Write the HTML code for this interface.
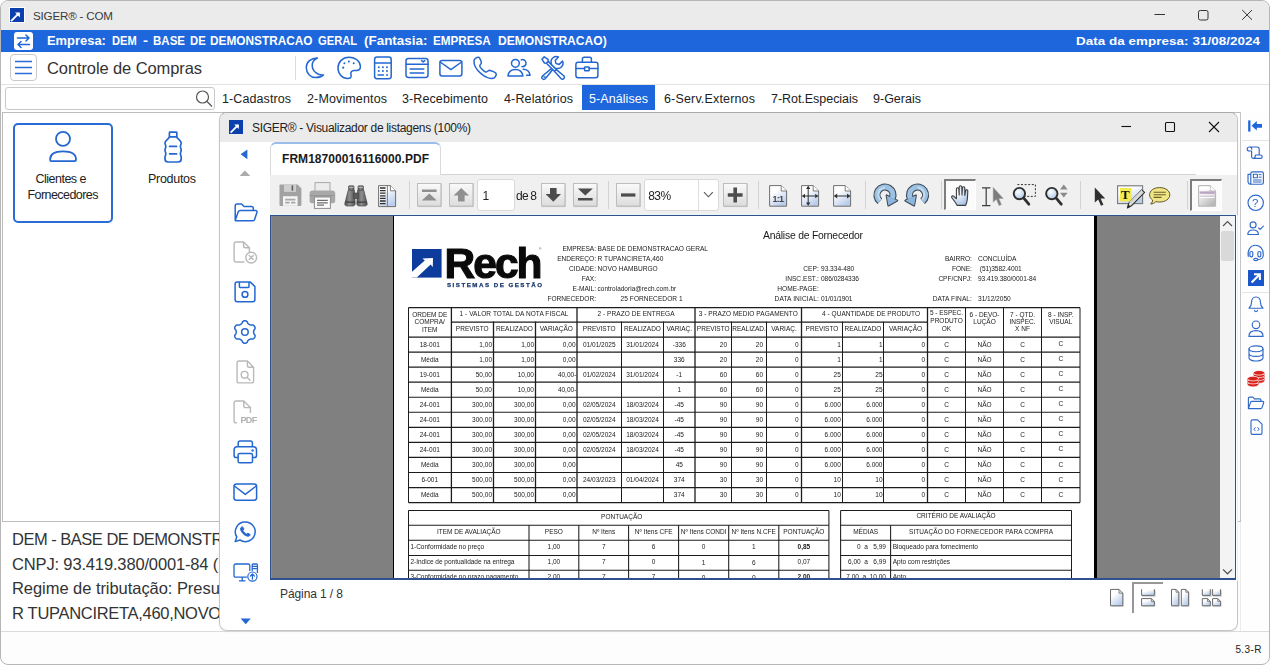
<!DOCTYPE html>
<html lang="pt-BR"><head><meta charset="utf-8"><title>SIGER - COM</title>
<style>
html,body{margin:0;padding:0;}
body{width:1270px;height:665px;overflow:hidden;position:relative;background:#fff;font-family:"Liberation Sans",sans-serif;}
body div,body svg,body span{position:absolute;}
.t{white-space:nowrap;}
svg{overflow:visible;}
</style></head>
<body>
<div style="left:0px;top:0px;width:1270px;height:665px;background:#fdfdfd;border:1px solid #b6b6b6;border-radius:8px;box-sizing:border-box;"></div>
<div style="left:1px;top:1px;width:1268px;height:29px;background:#ebebeb;border-radius:7px 7px 0 0;"></div>
<svg style="left:9px;top:7px;" width="16" height="16" viewBox="0 0 16 16"><rect width="16" height="16" fill="#fff"/><rect x="1" y="1" width="14" height="14" fill="#0b3fae"/><path d="M2 14.2 L10 6.2" stroke="#fff" stroke-width="1.9" fill="none"/><path d="M6 5.4 H10.9 V10.4 Z" fill="#fff"/></svg>
<span class="t" style="top:10px;font-size:11.6px;line-height:11.6px;color:#3a3a3a;letter-spacing:-0.180px;left:33px;">SIGER® - COM</span>
<svg style="left:1153px;top:7px;" width="14" height="14" viewBox="0 0 14 14"><path d="M1.5 7.5 H12" stroke="#333" stroke-width="1"/></svg>
<svg style="left:1197px;top:9px;" width="12" height="12" viewBox="0 0 12 12"><rect x="1.5" y="1.5" width="9.5" height="9.5" rx="1.8" fill="none" stroke="#333" stroke-width="1"/></svg>
<svg style="left:1241px;top:9px;" width="12" height="12" viewBox="0 0 12 12"><path d="M1.2 1 L11 10.8 M11 1 L1.2 10.8" stroke="#333" stroke-width="1"/></svg>
<div style="left:1px;top:30px;width:1268px;height:22px;background:#1d66dc;"></div>
<div style="left:14px;top:32px;width:19px;height:18px;background:#fff;border-radius:3px;"></div>
<svg style="left:14px;top:32px;" width="19" height="18" viewBox="0 0 19 18"><path d="M3.5 6 H15 M12 3 L15 6 L12 9 M15.5 12.5 H4 M7 9.5 L4 12.5 L7 15.5" stroke="#1d66dc" stroke-width="1.5" fill="none" stroke-linecap="round" stroke-linejoin="round"/></svg>
<span class="t" style="top:35px;font-size:12.4px;line-height:12.4px;color:#fff;font-weight:700;left:47.3px;transform:scaleX(1.0428);transform-origin:0 0;">Empresa:</span>
<span class="t" style="top:35px;font-size:12.4px;line-height:12.4px;color:#fff;font-weight:700;left:111.9px;transform:scaleX(0.8967);transform-origin:0 0;">DEM</span>
<span class="t" style="top:35px;font-size:12.4px;line-height:12.4px;color:#fff;font-weight:700;left:142.8px;transform:scaleX(1.2075);transform-origin:0 0;">-</span>
<span class="t" style="top:35px;font-size:12.4px;line-height:12.4px;color:#fff;font-weight:700;left:153px;transform:scaleX(0.9292);transform-origin:0 0;">BASE</span>
<span class="t" style="top:35px;font-size:12.4px;line-height:12.4px;color:#fff;font-weight:700;left:189.6px;transform:scaleX(0.9118);transform-origin:0 0;">DE</span>
<span class="t" style="top:35px;font-size:12.4px;line-height:12.4px;color:#fff;font-weight:700;left:210.1px;transform:scaleX(0.9545);transform-origin:0 0;">DEMONSTRACAO</span>
<span class="t" style="top:35px;font-size:12.4px;line-height:12.4px;color:#fff;font-weight:700;left:318.4px;transform:scaleX(0.9037);transform-origin:0 0;">GERAL</span>
<span class="t" style="top:35px;font-size:12.4px;line-height:12.4px;color:#fff;font-weight:700;left:364.2px;transform:scaleX(1.0832);transform-origin:0 0;">(Fantasia:</span>
<span class="t" style="top:35px;font-size:12.4px;line-height:12.4px;color:#fff;font-weight:700;left:433.3px;transform:scaleX(0.9432);transform-origin:0 0;">EMPRESA</span>
<span class="t" style="top:35px;font-size:12.4px;line-height:12.4px;color:#fff;font-weight:700;left:497.9px;transform:scaleX(0.9748);transform-origin:0 0;">DEMONSTRACAO)</span>
<span class="t" style="top:35px;font-size:13.4px;line-height:13.4px;color:#fff;font-weight:700;letter-spacing:0.062px;right:9.94px;transform-origin:50% 0.061899038461538464px;transform:scaleY(0.875);">Data da empresa: 31/08/2024</span>
<div style="left:1px;top:52px;width:1268px;height:32px;background:#fff;"></div>
<div style="left:1px;top:84px;width:1268px;height:1px;background:#e2e2e2;"></div>
<div style="left:1px;top:85px;width:1268px;height:27px;background:#fff;"></div>
<div style="left:10px;top:54px;width:27px;height:27px;border:1px solid #c9c9c9;border-radius:4px;box-sizing:border-box;background:#fff;"></div>
<svg style="left:10px;top:54px;" width="27" height="27" viewBox="0 0 27 27"><path d="M5 7.5 H22 M5 13.5 H22 M5 19.5 H22" stroke="#2a6cd6" stroke-width="1.6"/></svg>
<span class="t" style="top:60px;font-size:16.5px;line-height:16.5px;color:#333;letter-spacing:-0.102px;left:47px;">Controle de Compras</span>
<div style="left:295px;top:56px;width:1px;height:24px;background:#dcdcdc;"></div>
<div style="left:5px;top:87px;width:210px;height:23px;border:1px solid #c8c8c8;border-radius:3px;box-sizing:border-box;background:#fff;"></div>
<svg style="left:194px;top:89px;" width="20" height="20" viewBox="0 0 20 20"><circle cx="8.5" cy="8" r="6" fill="none" stroke="#555" stroke-width="1.2"/><path d="M13 12.5 L18 17.5" stroke="#555" stroke-width="1.3"/></svg>
<div style="left:582px;top:85px;width:73px;height:25px;background:#1d66dc;"></div>
<span class="t" style="top:93px;font-size:12.5px;line-height:12.5px;color:#222;letter-spacing:0.091px;left:222px;">1-Cadastros</span>
<span class="t" style="top:93px;font-size:12.5px;line-height:12.5px;color:#222;letter-spacing:0.136px;left:307px;">2-Movimentos</span>
<span class="t" style="top:93px;font-size:12.5px;line-height:12.5px;color:#222;letter-spacing:0.103px;left:402px;">3-Recebimento</span>
<span class="t" style="top:93px;font-size:12.5px;line-height:12.5px;color:#222;letter-spacing:0.146px;left:504px;">4-Relatórios</span>
<span class="t" style="top:93px;font-size:12.5px;line-height:12.5px;color:#fff;letter-spacing:0.069px;left:589px;">5-Análises</span>
<span class="t" style="top:93px;font-size:12.5px;line-height:12.5px;color:#222;letter-spacing:0.164px;left:664px;">6-Serv.Externos</span>
<span class="t" style="top:93px;font-size:12.5px;line-height:12.5px;color:#222;letter-spacing:-0.039px;left:771px;">7-Rot.Especiais</span>
<span class="t" style="top:93px;font-size:12.5px;line-height:12.5px;color:#222;letter-spacing:0.009px;left:873px;">9-Gerais</span>
<div style="left:2px;top:112px;width:1239px;height:410px;border:1px solid #bcbcbc;border-right-color:#c6c6c6;box-sizing:border-box;background:#fff;"></div>
<div style="left:13px;top:123px;width:100px;height:100px;border:2px solid #2a6cd6;border-radius:5px;box-sizing:border-box;"></div>
<span class="t" style="top:173px;font-size:12.5px;line-height:12.5px;color:#222;letter-spacing:-0.510px;left:60.74px;transform:translateX(-50%);">Clientes e</span>
<span class="t" style="top:189px;font-size:12.5px;line-height:12.5px;color:#222;letter-spacing:-0.557px;left:62.72px;transform:translateX(-50%);">Fornecedores</span>
<span class="t" style="top:173px;font-size:12.5px;line-height:12.5px;color:#222;letter-spacing:-0.290px;left:171.85px;transform:translateX(-50%);">Produtos</span>
<div style="left:1px;top:522px;width:1268px;height:109px;background:#fff;"></div>
<span class="t" style="top:531px;font-size:16.5px;line-height:16.5px;color:#333;left:12px;letter-spacing:-0.5px;">DEM - BASE DE DEMONSTRACAO GERAL</span>
<span class="t" style="top:556px;font-size:16.5px;line-height:16.5px;color:#333;left:12px;letter-spacing:-0.15px;">CNPJ: 93.419.380/0001-84 (Matriz)</span>
<span class="t" style="top:580px;font-size:16.5px;line-height:16.5px;color:#333;left:12px;letter-spacing:-0.05px;">Regime de tributação: Presumido</span>
<span class="t" style="top:605px;font-size:16.5px;line-height:16.5px;color:#333;left:12px;letter-spacing:-0.3px;">R TUPANCIRETA,460,NOVO HAMBURGO</span>
<div style="left:1px;top:631px;width:1268px;height:1px;background:#dcdcdc;"></div>
<span class="t" style="top:645px;font-size:10px;line-height:10px;color:#222;letter-spacing:0.387px;right:8.21px;">5.3-R</span>
<div style="left:1242px;top:112px;width:27px;height:519px;background:#fefefe;"></div>
<div style="left:1240px;top:522px;width:1px;height:109px;background:#ececec;"></div>
<div style="left:219px;top:112px;width:1019px;height:519px;background:#fff;border:1px solid #c4c4c4;border-top-color:#a9a9a9;border-radius:8px;box-sizing:border-box;box-shadow:0 1px 3px rgba(0,0,0,.05);overflow:hidden;"></div>
<div style="left:220px;top:113px;width:1017px;height:29px;background:#ebebeb;border-radius:7px 7px 0 0;"></div>
<svg style="left:229px;top:120px;" width="14" height="14" viewBox="0 0 14 14"><rect width="14" height="14" fill="#0b3fae"/><path d="M1.6 12.6 L9 5.2" stroke="#fff" stroke-width="1.8" fill="none"/><path d="M5.2 4.4 H9.8 V9 Z" fill="#fff"/></svg>
<span class="t" style="top:122px;font-size:12px;line-height:12px;color:#222;letter-spacing:-0.310px;left:252px;">SIGER® - Visualizador de listagens (100%)</span>
<svg style="left:1119px;top:119px;" width="14" height="14" viewBox="0 0 14 14"><path d="M2.4 7.5 H12" stroke="#111" stroke-width="1.1"/></svg>
<svg style="left:1164px;top:121px;" width="12" height="12" viewBox="0 0 12 12"><rect x="1.5" y="1.5" width="9" height="9" rx="1" fill="none" stroke="#111" stroke-width="1.1"/></svg>
<svg style="left:1208px;top:121px;" width="12" height="12" viewBox="0 0 12 12"><path d="M1 1 L11 11 M11 1 L1 11" stroke="#111" stroke-width="1.1"/></svg>
<div style="left:270px;top:174px;width:926px;height:1px;background:#d4d4d4;"></div>
<div style="left:270px;top:142px;width:171px;height:34px;background:#fff;border:1px solid #dadada;border-top:2px solid #9bbdeb;border-bottom:none;border-radius:6px 6px 0 0;box-sizing:border-box;"></div>
<span class="t" style="top:153px;font-size:12px;line-height:12px;color:#1b1b1b;font-weight:700;letter-spacing:0.045px;left:282px;">FRM18700016116000.PDF</span>
<div style="left:270px;top:175px;width:967px;height:40px;background:#f0f0f0;"></div>
<div style="left:270px;top:214px;width:966px;height:1px;background:#e9f6fd;"></div>
<div style="left:270px;top:215px;width:966px;height:365px;background:#808080;border:1px solid #2f528f;border-bottom-width:2px;box-sizing:border-box;"></div>
<div style="left:271px;top:216px;width:1px;height:362px;background:#6d8fc3;"></div>
<div style="left:1237px;top:215px;width:1px;height:366px;background:#efefef;"></div>
<div style="left:393px;top:216px;width:704px;height:362px;background:#000;"></div>
<div style="left:394px;top:216px;width:700px;height:362px;background:#fff;"></div>
<div style="left:1220px;top:216px;width:14px;height:362px;background:#f3f3f3;"></div>
<div style="left:1234px;top:216px;width:1px;height:362px;background:#e9f6fd;"></div>
<div style="left:1221px;top:231px;width:13px;height:30px;background:#d9d9d9;border-radius:2.5px;"></div>
<svg style="left:1220px;top:217px;" width="16" height="14" viewBox="0 0 16 14"><path d="M3 9 L7.5 4.6 L12 9" stroke="#505050" stroke-width="1.2" fill="none"/></svg>
<svg style="left:1220px;top:565px;" width="16" height="14" viewBox="0 0 16 14"><path d="M3 4.4 L7.5 8.8 L12 4.4" stroke="#505050" stroke-width="1.2" fill="none"/></svg>
<span class="t" style="top:588px;font-size:12px;line-height:12px;color:#333;letter-spacing:-0.097px;left:280px;">Página 1 / 8</span>
<div class="clip" style="left:0;top:0;width:1270px;height:578px;overflow:hidden;will-change:transform;">
<span class="t" style="top:231px;font-size:10.4px;line-height:10.4px;color:#1a1a1a;letter-spacing:-0.227px;left:812.89px;transform:translateX(-50%);">Análise de Fornecedor</span>
<svg style="left:412px;top:249px;" width="29.6" height="28.6" viewBox="0 0 29.6 28.6"><rect width="29.6" height="28.6" fill="#0d3c9c"/><path d="M0 22.8 L12.8 11.6 L10.4 9.6 L21 9 L20.8 18 L18.6 15.6 L4.8 28.6 L0 28.6 Z" fill="#fff"/></svg>
<span class="t" style="top:243px;font-size:42.5px;line-height:42.5px;color:#0a0a0a;font-weight:700;letter-spacing:-1.979px;left:444.6px;-webkit-text-stroke:1.1px #0a0a0a;">Rech</span>
<span class="t" style="top:282px;font-size:6.2px;line-height:6.2px;color:#17386f;font-weight:700;letter-spacing:1.483px;left:447px;-webkit-text-stroke:0.25px #17386f;">SISTEMAS DE GESTÃO</span>
<span class="t" style="top:248px;font-size:3.5px;line-height:3.5px;color:#555;left:539px;">®</span>
<span class="t" style="top:246px;font-size:6.6px;line-height:6.6px;color:#1a1a1a;letter-spacing:-0.083px;right:674.08px;">EMPRESA:</span>
<span class="t" style="top:246px;font-size:6.6px;line-height:6.6px;color:#1a1a1a;letter-spacing:-0.021px;left:597.5px;">BASE DE DEMONSTRACAO GERAL</span>
<span class="t" style="top:256px;font-size:6.6px;line-height:6.6px;color:#1a1a1a;letter-spacing:-0.050px;right:674.05px;">ENDEREÇO:</span>
<span class="t" style="top:256px;font-size:6.6px;line-height:6.6px;color:#1a1a1a;letter-spacing:0.071px;left:597.5px;">R TUPANCIRETA,460</span>
<span class="t" style="top:266px;font-size:6.6px;line-height:6.6px;color:#1a1a1a;letter-spacing:0.042px;right:673.96px;">CIDADE:</span>
<span class="t" style="top:266px;font-size:6.6px;line-height:6.6px;color:#1a1a1a;letter-spacing:0.009px;left:597.5px;">NOVO HAMBURGO</span>
<span class="t" style="top:276px;font-size:6.6px;line-height:6.6px;color:#1a1a1a;letter-spacing:-0.032px;right:674.03px;">FAX:</span>
<span class="t" style="top:286px;font-size:6.6px;line-height:6.6px;color:#1a1a1a;letter-spacing:-0.071px;right:674.07px;">E-MAIL:</span>
<span class="t" style="top:286px;font-size:6.4px;line-height:6.4px;color:#1a1a1a;letter-spacing:0.064px;left:597.5px;">controladoria@rech.com.br</span>
<span class="t" style="top:296px;font-size:6.6px;line-height:6.6px;color:#1a1a1a;letter-spacing:-0.013px;right:674.01px;">FORNECEDOR:</span>
<span class="t" style="top:296px;font-size:6.6px;line-height:6.6px;color:#1a1a1a;letter-spacing:0.046px;left:620.5px;">25 FORNECEDOR 1</span>
<span class="t" style="top:266px;font-size:6.6px;line-height:6.6px;color:#1a1a1a;letter-spacing:0.036px;right:451.16px;">CEP:</span>
<span class="t" style="top:266px;font-size:6.6px;line-height:6.6px;color:#1a1a1a;letter-spacing:-0.019px;left:821px;">93.334-480</span>
<span class="t" style="top:276px;font-size:6.6px;line-height:6.6px;color:#1a1a1a;letter-spacing:0.017px;right:451.18px;">INSC.EST.:</span>
<span class="t" style="top:276px;font-size:6.6px;line-height:6.6px;color:#1a1a1a;letter-spacing:-0.052px;left:821px;">086/0284336</span>
<span class="t" style="top:286px;font-size:6.6px;line-height:6.6px;color:#1a1a1a;letter-spacing:-0.017px;right:451.22px;">HOME-PAGE:</span>
<span class="t" style="top:296px;font-size:6.6px;line-height:6.6px;color:#1a1a1a;letter-spacing:0.100px;right:451.10px;">DATA INICIAL:</span>
<span class="t" style="top:296px;font-size:6.6px;line-height:6.6px;color:#1a1a1a;letter-spacing:-0.168px;left:821px;">01/01/1901</span>
<span class="t" style="top:256px;font-size:6.6px;line-height:6.6px;color:#1a1a1a;letter-spacing:-0.021px;right:298.12px;">BAIRRO:</span>
<span class="t" style="top:256px;font-size:6.6px;line-height:6.6px;color:#1a1a1a;letter-spacing:-0.055px;left:978px;">CONCLUÍDA</span>
<span class="t" style="top:266px;font-size:6.6px;line-height:6.6px;color:#1a1a1a;letter-spacing:-0.039px;right:298.14px;">FONE:</span>
<span class="t" style="top:266px;font-size:6.6px;line-height:6.6px;color:#1a1a1a;letter-spacing:-0.076px;left:979.8px;">(51)3582.4001</span>
<span class="t" style="top:276px;font-size:6.6px;line-height:6.6px;color:#1a1a1a;letter-spacing:-0.072px;right:298.17px;">CPF/CNPJ:</span>
<span class="t" style="top:276px;font-size:6.6px;line-height:6.6px;color:#1a1a1a;letter-spacing:-0.050px;left:978px;">93.419.380/0001-84</span>
<span class="t" style="top:296px;font-size:6.6px;line-height:6.6px;color:#1a1a1a;letter-spacing:0.061px;right:298.04px;">DATA FINAL:</span>
<span class="t" style="top:296px;font-size:6.6px;line-height:6.6px;color:#1a1a1a;letter-spacing:-0.035px;left:978px;">31/12/2050</span>
<span class="t" style="top:312px;font-size:6.5px;line-height:6.5px;color:#1a1a1a;left:429.75px;transform:translateX(-50%);">ORDEM DE</span>
<span class="t" style="top:319px;font-size:6.5px;line-height:6.5px;color:#1a1a1a;left:429.75px;transform:translateX(-50%);">COMPRA/</span>
<span class="t" style="top:327px;font-size:6.5px;line-height:6.5px;color:#1a1a1a;left:429.75px;transform:translateX(-50%);">ITEM</span>
<span class="t" style="top:311px;font-size:6.5px;line-height:6.5px;color:#1a1a1a;letter-spacing:0.075px;left:514.04px;transform:translateX(-50%);">1 - VALOR TOTAL DA NOTA FISCAL</span>
<span class="t" style="top:311px;font-size:6.5px;line-height:6.5px;color:#1a1a1a;letter-spacing:0.060px;left:636.03px;transform:translateX(-50%);">2 - PRAZO DE ENTREGA</span>
<span class="t" style="top:311px;font-size:6.5px;line-height:6.5px;color:#1a1a1a;letter-spacing:0.057px;left:748.28px;transform:translateX(-50%);">3 - PRAZO MEDIO PAGAMENTO</span>
<span class="t" style="top:311px;font-size:6.5px;line-height:6.5px;color:#1a1a1a;letter-spacing:0.040px;left:871.02px;transform:translateX(-50%);">4 - QUANTIDADE DE PRODUTO</span>
<span class="t" style="top:326px;font-size:6.5px;line-height:6.5px;color:#1a1a1a;left:472.25px;transform:translateX(-50%);">PREVISTO</span>
<span class="t" style="top:326px;font-size:6.5px;line-height:6.5px;color:#1a1a1a;left:514.50px;transform:translateX(-50%);">REALIZADO</span>
<span class="t" style="top:326px;font-size:6.5px;line-height:6.5px;color:#1a1a1a;left:556.25px;transform:translateX(-50%);">VARIAÇÃO</span>
<span class="t" style="top:326px;font-size:6.5px;line-height:6.5px;color:#1a1a1a;left:599.25px;transform:translateX(-50%);">PREVISTO</span>
<span class="t" style="top:326px;font-size:6.5px;line-height:6.5px;color:#1a1a1a;left:642.50px;transform:translateX(-50%);">REALIZADO</span>
<span class="t" style="top:326px;font-size:6.5px;line-height:6.5px;color:#1a1a1a;left:679.25px;transform:translateX(-50%);">VARIAÇ.</span>
<span class="t" style="top:326px;font-size:6.5px;line-height:6.5px;color:#1a1a1a;left:713.25px;transform:translateX(-50%);">PREVISTO</span>
<span class="t" style="top:326px;font-size:6.5px;line-height:6.5px;color:#1a1a1a;left:749.00px;transform:translateX(-50%);">REALIZAD.</span>
<span class="t" style="top:326px;font-size:6.5px;line-height:6.5px;color:#1a1a1a;left:784.00px;transform:translateX(-50%);">VARIAÇ.</span>
<span class="t" style="top:326px;font-size:6.5px;line-height:6.5px;color:#1a1a1a;left:822.00px;transform:translateX(-50%);">PREVISTO</span>
<span class="t" style="top:326px;font-size:6.5px;line-height:6.5px;color:#1a1a1a;left:863.00px;transform:translateX(-50%);">REALIZADO</span>
<span class="t" style="top:326px;font-size:6.5px;line-height:6.5px;color:#1a1a1a;left:905.50px;transform:translateX(-50%);">VARIAÇÃO</span>
<span class="t" style="top:310px;font-size:6.5px;line-height:6.5px;color:#1a1a1a;left:946.50px;transform:translateX(-50%);">5 - ESPEC.</span>
<span class="t" style="top:318px;font-size:6.5px;line-height:6.5px;color:#1a1a1a;left:946.50px;transform:translateX(-50%);">PRODUTO</span>
<span class="t" style="top:326px;font-size:6.5px;line-height:6.5px;color:#1a1a1a;left:946.50px;transform:translateX(-50%);">OK</span>
<span class="t" style="top:312px;font-size:6.5px;line-height:6.5px;color:#1a1a1a;left:984.50px;transform:translateX(-50%);">6 - DEVO-</span>
<span class="t" style="top:319px;font-size:6.5px;line-height:6.5px;color:#1a1a1a;left:984.50px;transform:translateX(-50%);">LUÇÃO</span>
<span class="t" style="top:312px;font-size:6.5px;line-height:6.5px;color:#1a1a1a;left:1022.50px;transform:translateX(-50%);">7 - QTD.</span>
<span class="t" style="top:319px;font-size:6.5px;line-height:6.5px;color:#1a1a1a;left:1022.50px;transform:translateX(-50%);">INSPEC.</span>
<span class="t" style="top:326px;font-size:6.5px;line-height:6.5px;color:#1a1a1a;left:1022.50px;transform:translateX(-50%);">X NF</span>
<span class="t" style="top:312px;font-size:6.5px;line-height:6.5px;color:#1a1a1a;left:1060.75px;transform:translateX(-50%);">8 - INSP.</span>
<span class="t" style="top:319px;font-size:6.5px;line-height:6.5px;color:#1a1a1a;left:1060.75px;transform:translateX(-50%);">VISUAL</span>
<span class="t" style="top:342px;font-size:6.5px;line-height:6.5px;color:#1a1a1a;left:429.75px;transform:translateX(-50%);">18-001</span>
<span class="t" style="top:342px;font-size:6.5px;line-height:6.5px;color:#1a1a1a;right:778.00px;">1,00</span>
<span class="t" style="top:342px;font-size:6.5px;line-height:6.5px;color:#1a1a1a;right:736.00px;">1,00</span>
<span class="t" style="top:342px;font-size:6.5px;line-height:6.5px;color:#1a1a1a;right:694.50px;">0,00</span>
<span class="t" style="top:342px;font-size:6.5px;line-height:6.5px;color:#1a1a1a;left:599.25px;transform:translateX(-50%);">01/01/2025</span>
<span class="t" style="top:342px;font-size:6.5px;line-height:6.5px;color:#1a1a1a;left:642.50px;transform:translateX(-50%);">31/01/2024</span>
<span class="t" style="top:342px;font-size:6.5px;line-height:6.5px;color:#1a1a1a;left:679.25px;transform:translateX(-50%);">-336</span>
<span class="t" style="top:342px;font-size:6.5px;line-height:6.5px;color:#1a1a1a;right:543.00px;">20</span>
<span class="t" style="top:342px;font-size:6.5px;line-height:6.5px;color:#1a1a1a;right:507.00px;">20</span>
<span class="t" style="top:342px;font-size:6.5px;line-height:6.5px;color:#1a1a1a;right:471.50px;">0</span>
<span class="t" style="top:342px;font-size:6.5px;line-height:6.5px;color:#1a1a1a;right:429.20px;">1</span>
<span class="t" style="top:342px;font-size:6.5px;line-height:6.5px;color:#1a1a1a;right:387.50px;">1</span>
<span class="t" style="top:342px;font-size:6.5px;line-height:6.5px;color:#1a1a1a;right:344.80px;">0</span>
<span class="t" style="top:342px;font-size:6.5px;line-height:6.5px;color:#1a1a1a;left:946.50px;transform:translateX(-50%);">C</span>
<span class="t" style="top:342px;font-size:6.5px;line-height:6.5px;color:#1a1a1a;left:984.50px;transform:translateX(-50%);">NÃO</span>
<span class="t" style="top:342px;font-size:6.5px;line-height:6.5px;color:#1a1a1a;left:1022.50px;transform:translateX(-50%);">C</span>
<span class="t" style="top:341px;font-size:6.5px;line-height:6.5px;color:#1a1a1a;left:1060.75px;transform:translateX(-50%);">C</span>
<span class="t" style="top:357px;font-size:6.5px;line-height:6.5px;color:#1a1a1a;left:429.75px;transform:translateX(-50%);">Média</span>
<span class="t" style="top:357px;font-size:6.5px;line-height:6.5px;color:#1a1a1a;right:778.00px;">1,00</span>
<span class="t" style="top:357px;font-size:6.5px;line-height:6.5px;color:#1a1a1a;right:736.00px;">1,00</span>
<span class="t" style="top:357px;font-size:6.5px;line-height:6.5px;color:#1a1a1a;right:694.50px;">0,00</span>
<span class="t" style="top:357px;font-size:6.5px;line-height:6.5px;color:#1a1a1a;left:679.25px;transform:translateX(-50%);">336</span>
<span class="t" style="top:357px;font-size:6.5px;line-height:6.5px;color:#1a1a1a;right:543.00px;">20</span>
<span class="t" style="top:357px;font-size:6.5px;line-height:6.5px;color:#1a1a1a;right:507.00px;">20</span>
<span class="t" style="top:357px;font-size:6.5px;line-height:6.5px;color:#1a1a1a;right:471.50px;">0</span>
<span class="t" style="top:357px;font-size:6.5px;line-height:6.5px;color:#1a1a1a;right:429.20px;">1</span>
<span class="t" style="top:357px;font-size:6.5px;line-height:6.5px;color:#1a1a1a;right:387.50px;">1</span>
<span class="t" style="top:357px;font-size:6.5px;line-height:6.5px;color:#1a1a1a;right:344.80px;">0</span>
<span class="t" style="top:357px;font-size:6.5px;line-height:6.5px;color:#1a1a1a;left:946.50px;transform:translateX(-50%);">C</span>
<span class="t" style="top:357px;font-size:6.5px;line-height:6.5px;color:#1a1a1a;left:984.50px;transform:translateX(-50%);">NÃO</span>
<span class="t" style="top:357px;font-size:6.5px;line-height:6.5px;color:#1a1a1a;left:1022.50px;transform:translateX(-50%);">C</span>
<span class="t" style="top:356px;font-size:6.5px;line-height:6.5px;color:#1a1a1a;left:1060.75px;transform:translateX(-50%);">C</span>
<span class="t" style="top:372px;font-size:6.5px;line-height:6.5px;color:#1a1a1a;left:429.75px;transform:translateX(-50%);">19-001</span>
<span class="t" style="top:372px;font-size:6.5px;line-height:6.5px;color:#1a1a1a;right:778.00px;">50,00</span>
<span class="t" style="top:372px;font-size:6.5px;line-height:6.5px;color:#1a1a1a;right:736.00px;">10,00</span>
<span class="t" style="top:372px;font-size:6.5px;line-height:6.5px;color:#1a1a1a;right:693.70px;">40,00-</span>
<span class="t" style="top:372px;font-size:6.5px;line-height:6.5px;color:#1a1a1a;left:599.25px;transform:translateX(-50%);">01/02/2024</span>
<span class="t" style="top:372px;font-size:6.5px;line-height:6.5px;color:#1a1a1a;left:642.50px;transform:translateX(-50%);">31/01/2024</span>
<span class="t" style="top:372px;font-size:6.5px;line-height:6.5px;color:#1a1a1a;left:679.25px;transform:translateX(-50%);">-1</span>
<span class="t" style="top:372px;font-size:6.5px;line-height:6.5px;color:#1a1a1a;right:543.00px;">60</span>
<span class="t" style="top:372px;font-size:6.5px;line-height:6.5px;color:#1a1a1a;right:507.00px;">60</span>
<span class="t" style="top:372px;font-size:6.5px;line-height:6.5px;color:#1a1a1a;right:471.50px;">0</span>
<span class="t" style="top:372px;font-size:6.5px;line-height:6.5px;color:#1a1a1a;right:429.20px;">25</span>
<span class="t" style="top:372px;font-size:6.5px;line-height:6.5px;color:#1a1a1a;right:387.50px;">25</span>
<span class="t" style="top:372px;font-size:6.5px;line-height:6.5px;color:#1a1a1a;right:344.80px;">0</span>
<span class="t" style="top:372px;font-size:6.5px;line-height:6.5px;color:#1a1a1a;left:946.50px;transform:translateX(-50%);">C</span>
<span class="t" style="top:372px;font-size:6.5px;line-height:6.5px;color:#1a1a1a;left:984.50px;transform:translateX(-50%);">NÃO</span>
<span class="t" style="top:372px;font-size:6.5px;line-height:6.5px;color:#1a1a1a;left:1022.50px;transform:translateX(-50%);">C</span>
<span class="t" style="top:371px;font-size:6.5px;line-height:6.5px;color:#1a1a1a;left:1060.75px;transform:translateX(-50%);">C</span>
<span class="t" style="top:387px;font-size:6.5px;line-height:6.5px;color:#1a1a1a;left:429.75px;transform:translateX(-50%);">Média</span>
<span class="t" style="top:387px;font-size:6.5px;line-height:6.5px;color:#1a1a1a;right:778.00px;">50,00</span>
<span class="t" style="top:387px;font-size:6.5px;line-height:6.5px;color:#1a1a1a;right:736.00px;">10,00</span>
<span class="t" style="top:387px;font-size:6.5px;line-height:6.5px;color:#1a1a1a;right:693.70px;">40,00-</span>
<span class="t" style="top:387px;font-size:6.5px;line-height:6.5px;color:#1a1a1a;left:679.25px;transform:translateX(-50%);">1</span>
<span class="t" style="top:387px;font-size:6.5px;line-height:6.5px;color:#1a1a1a;right:543.00px;">60</span>
<span class="t" style="top:387px;font-size:6.5px;line-height:6.5px;color:#1a1a1a;right:507.00px;">60</span>
<span class="t" style="top:387px;font-size:6.5px;line-height:6.5px;color:#1a1a1a;right:471.50px;">0</span>
<span class="t" style="top:387px;font-size:6.5px;line-height:6.5px;color:#1a1a1a;right:429.20px;">25</span>
<span class="t" style="top:387px;font-size:6.5px;line-height:6.5px;color:#1a1a1a;right:387.50px;">25</span>
<span class="t" style="top:387px;font-size:6.5px;line-height:6.5px;color:#1a1a1a;right:344.80px;">0</span>
<span class="t" style="top:387px;font-size:6.5px;line-height:6.5px;color:#1a1a1a;left:946.50px;transform:translateX(-50%);">C</span>
<span class="t" style="top:387px;font-size:6.5px;line-height:6.5px;color:#1a1a1a;left:984.50px;transform:translateX(-50%);">NÃO</span>
<span class="t" style="top:387px;font-size:6.5px;line-height:6.5px;color:#1a1a1a;left:1022.50px;transform:translateX(-50%);">C</span>
<span class="t" style="top:386px;font-size:6.5px;line-height:6.5px;color:#1a1a1a;left:1060.75px;transform:translateX(-50%);">C</span>
<span class="t" style="top:402px;font-size:6.5px;line-height:6.5px;color:#1a1a1a;left:429.75px;transform:translateX(-50%);">24-001</span>
<span class="t" style="top:402px;font-size:6.5px;line-height:6.5px;color:#1a1a1a;right:778.00px;">300,00</span>
<span class="t" style="top:402px;font-size:6.5px;line-height:6.5px;color:#1a1a1a;right:736.00px;">300,00</span>
<span class="t" style="top:402px;font-size:6.5px;line-height:6.5px;color:#1a1a1a;right:694.50px;">0,00</span>
<span class="t" style="top:402px;font-size:6.5px;line-height:6.5px;color:#1a1a1a;left:599.25px;transform:translateX(-50%);">02/05/2024</span>
<span class="t" style="top:402px;font-size:6.5px;line-height:6.5px;color:#1a1a1a;left:642.50px;transform:translateX(-50%);">18/03/2024</span>
<span class="t" style="top:402px;font-size:6.5px;line-height:6.5px;color:#1a1a1a;left:679.25px;transform:translateX(-50%);">-45</span>
<span class="t" style="top:402px;font-size:6.5px;line-height:6.5px;color:#1a1a1a;right:543.00px;">90</span>
<span class="t" style="top:402px;font-size:6.5px;line-height:6.5px;color:#1a1a1a;right:507.00px;">90</span>
<span class="t" style="top:402px;font-size:6.5px;line-height:6.5px;color:#1a1a1a;right:471.50px;">0</span>
<span class="t" style="top:402px;font-size:6.5px;line-height:6.5px;color:#1a1a1a;right:429.20px;">6.000</span>
<span class="t" style="top:402px;font-size:6.5px;line-height:6.5px;color:#1a1a1a;right:387.50px;">6.000</span>
<span class="t" style="top:402px;font-size:6.5px;line-height:6.5px;color:#1a1a1a;right:344.80px;">0</span>
<span class="t" style="top:402px;font-size:6.5px;line-height:6.5px;color:#1a1a1a;left:946.50px;transform:translateX(-50%);">C</span>
<span class="t" style="top:402px;font-size:6.5px;line-height:6.5px;color:#1a1a1a;left:984.50px;transform:translateX(-50%);">NÃO</span>
<span class="t" style="top:402px;font-size:6.5px;line-height:6.5px;color:#1a1a1a;left:1022.50px;transform:translateX(-50%);">C</span>
<span class="t" style="top:401px;font-size:6.5px;line-height:6.5px;color:#1a1a1a;left:1060.75px;transform:translateX(-50%);">C</span>
<span class="t" style="top:417px;font-size:6.5px;line-height:6.5px;color:#1a1a1a;left:429.75px;transform:translateX(-50%);">24-001</span>
<span class="t" style="top:417px;font-size:6.5px;line-height:6.5px;color:#1a1a1a;right:778.00px;">300,00</span>
<span class="t" style="top:417px;font-size:6.5px;line-height:6.5px;color:#1a1a1a;right:736.00px;">300,00</span>
<span class="t" style="top:417px;font-size:6.5px;line-height:6.5px;color:#1a1a1a;right:694.50px;">0,00</span>
<span class="t" style="top:417px;font-size:6.5px;line-height:6.5px;color:#1a1a1a;left:599.25px;transform:translateX(-50%);">02/05/2024</span>
<span class="t" style="top:417px;font-size:6.5px;line-height:6.5px;color:#1a1a1a;left:642.50px;transform:translateX(-50%);">18/03/2024</span>
<span class="t" style="top:417px;font-size:6.5px;line-height:6.5px;color:#1a1a1a;left:679.25px;transform:translateX(-50%);">-45</span>
<span class="t" style="top:417px;font-size:6.5px;line-height:6.5px;color:#1a1a1a;right:543.00px;">90</span>
<span class="t" style="top:417px;font-size:6.5px;line-height:6.5px;color:#1a1a1a;right:507.00px;">90</span>
<span class="t" style="top:417px;font-size:6.5px;line-height:6.5px;color:#1a1a1a;right:471.50px;">0</span>
<span class="t" style="top:417px;font-size:6.5px;line-height:6.5px;color:#1a1a1a;right:429.20px;">6.000</span>
<span class="t" style="top:417px;font-size:6.5px;line-height:6.5px;color:#1a1a1a;right:387.50px;">6.000</span>
<span class="t" style="top:417px;font-size:6.5px;line-height:6.5px;color:#1a1a1a;right:344.80px;">0</span>
<span class="t" style="top:417px;font-size:6.5px;line-height:6.5px;color:#1a1a1a;left:946.50px;transform:translateX(-50%);">C</span>
<span class="t" style="top:417px;font-size:6.5px;line-height:6.5px;color:#1a1a1a;left:984.50px;transform:translateX(-50%);">NÃO</span>
<span class="t" style="top:417px;font-size:6.5px;line-height:6.5px;color:#1a1a1a;left:1022.50px;transform:translateX(-50%);">C</span>
<span class="t" style="top:416px;font-size:6.5px;line-height:6.5px;color:#1a1a1a;left:1060.75px;transform:translateX(-50%);">C</span>
<span class="t" style="top:432px;font-size:6.5px;line-height:6.5px;color:#1a1a1a;left:429.75px;transform:translateX(-50%);">24-001</span>
<span class="t" style="top:432px;font-size:6.5px;line-height:6.5px;color:#1a1a1a;right:778.00px;">300,00</span>
<span class="t" style="top:432px;font-size:6.5px;line-height:6.5px;color:#1a1a1a;right:736.00px;">300,00</span>
<span class="t" style="top:432px;font-size:6.5px;line-height:6.5px;color:#1a1a1a;right:694.50px;">0,00</span>
<span class="t" style="top:432px;font-size:6.5px;line-height:6.5px;color:#1a1a1a;left:599.25px;transform:translateX(-50%);">02/05/2024</span>
<span class="t" style="top:432px;font-size:6.5px;line-height:6.5px;color:#1a1a1a;left:642.50px;transform:translateX(-50%);">18/03/2024</span>
<span class="t" style="top:432px;font-size:6.5px;line-height:6.5px;color:#1a1a1a;left:679.25px;transform:translateX(-50%);">-45</span>
<span class="t" style="top:432px;font-size:6.5px;line-height:6.5px;color:#1a1a1a;right:543.00px;">90</span>
<span class="t" style="top:432px;font-size:6.5px;line-height:6.5px;color:#1a1a1a;right:507.00px;">90</span>
<span class="t" style="top:432px;font-size:6.5px;line-height:6.5px;color:#1a1a1a;right:471.50px;">0</span>
<span class="t" style="top:432px;font-size:6.5px;line-height:6.5px;color:#1a1a1a;right:429.20px;">6.000</span>
<span class="t" style="top:432px;font-size:6.5px;line-height:6.5px;color:#1a1a1a;right:387.50px;">6.000</span>
<span class="t" style="top:432px;font-size:6.5px;line-height:6.5px;color:#1a1a1a;right:344.80px;">0</span>
<span class="t" style="top:432px;font-size:6.5px;line-height:6.5px;color:#1a1a1a;left:946.50px;transform:translateX(-50%);">C</span>
<span class="t" style="top:432px;font-size:6.5px;line-height:6.5px;color:#1a1a1a;left:984.50px;transform:translateX(-50%);">NÃO</span>
<span class="t" style="top:432px;font-size:6.5px;line-height:6.5px;color:#1a1a1a;left:1022.50px;transform:translateX(-50%);">C</span>
<span class="t" style="top:431px;font-size:6.5px;line-height:6.5px;color:#1a1a1a;left:1060.75px;transform:translateX(-50%);">C</span>
<span class="t" style="top:447px;font-size:6.5px;line-height:6.5px;color:#1a1a1a;left:429.75px;transform:translateX(-50%);">24-001</span>
<span class="t" style="top:447px;font-size:6.5px;line-height:6.5px;color:#1a1a1a;right:778.00px;">300,00</span>
<span class="t" style="top:447px;font-size:6.5px;line-height:6.5px;color:#1a1a1a;right:736.00px;">300,00</span>
<span class="t" style="top:447px;font-size:6.5px;line-height:6.5px;color:#1a1a1a;right:694.50px;">0,00</span>
<span class="t" style="top:447px;font-size:6.5px;line-height:6.5px;color:#1a1a1a;left:599.25px;transform:translateX(-50%);">02/05/2024</span>
<span class="t" style="top:447px;font-size:6.5px;line-height:6.5px;color:#1a1a1a;left:642.50px;transform:translateX(-50%);">18/03/2024</span>
<span class="t" style="top:447px;font-size:6.5px;line-height:6.5px;color:#1a1a1a;left:679.25px;transform:translateX(-50%);">-45</span>
<span class="t" style="top:447px;font-size:6.5px;line-height:6.5px;color:#1a1a1a;right:543.00px;">90</span>
<span class="t" style="top:447px;font-size:6.5px;line-height:6.5px;color:#1a1a1a;right:507.00px;">90</span>
<span class="t" style="top:447px;font-size:6.5px;line-height:6.5px;color:#1a1a1a;right:471.50px;">0</span>
<span class="t" style="top:447px;font-size:6.5px;line-height:6.5px;color:#1a1a1a;right:429.20px;">6.000</span>
<span class="t" style="top:447px;font-size:6.5px;line-height:6.5px;color:#1a1a1a;right:387.50px;">6.000</span>
<span class="t" style="top:447px;font-size:6.5px;line-height:6.5px;color:#1a1a1a;right:344.80px;">0</span>
<span class="t" style="top:447px;font-size:6.5px;line-height:6.5px;color:#1a1a1a;left:946.50px;transform:translateX(-50%);">C</span>
<span class="t" style="top:447px;font-size:6.5px;line-height:6.5px;color:#1a1a1a;left:984.50px;transform:translateX(-50%);">NÃO</span>
<span class="t" style="top:447px;font-size:6.5px;line-height:6.5px;color:#1a1a1a;left:1022.50px;transform:translateX(-50%);">C</span>
<span class="t" style="top:446px;font-size:6.5px;line-height:6.5px;color:#1a1a1a;left:1060.75px;transform:translateX(-50%);">C</span>
<span class="t" style="top:462px;font-size:6.5px;line-height:6.5px;color:#1a1a1a;left:429.75px;transform:translateX(-50%);">Média</span>
<span class="t" style="top:462px;font-size:6.5px;line-height:6.5px;color:#1a1a1a;right:778.00px;">300,00</span>
<span class="t" style="top:462px;font-size:6.5px;line-height:6.5px;color:#1a1a1a;right:736.00px;">300,00</span>
<span class="t" style="top:462px;font-size:6.5px;line-height:6.5px;color:#1a1a1a;right:694.50px;">0,00</span>
<span class="t" style="top:462px;font-size:6.5px;line-height:6.5px;color:#1a1a1a;left:679.25px;transform:translateX(-50%);">45</span>
<span class="t" style="top:462px;font-size:6.5px;line-height:6.5px;color:#1a1a1a;right:543.00px;">90</span>
<span class="t" style="top:462px;font-size:6.5px;line-height:6.5px;color:#1a1a1a;right:507.00px;">90</span>
<span class="t" style="top:462px;font-size:6.5px;line-height:6.5px;color:#1a1a1a;right:471.50px;">0</span>
<span class="t" style="top:462px;font-size:6.5px;line-height:6.5px;color:#1a1a1a;right:429.20px;">6.000</span>
<span class="t" style="top:462px;font-size:6.5px;line-height:6.5px;color:#1a1a1a;right:387.50px;">6.000</span>
<span class="t" style="top:462px;font-size:6.5px;line-height:6.5px;color:#1a1a1a;right:344.80px;">0</span>
<span class="t" style="top:462px;font-size:6.5px;line-height:6.5px;color:#1a1a1a;left:946.50px;transform:translateX(-50%);">C</span>
<span class="t" style="top:462px;font-size:6.5px;line-height:6.5px;color:#1a1a1a;left:984.50px;transform:translateX(-50%);">NÃO</span>
<span class="t" style="top:462px;font-size:6.5px;line-height:6.5px;color:#1a1a1a;left:1022.50px;transform:translateX(-50%);">C</span>
<span class="t" style="top:462px;font-size:6.5px;line-height:6.5px;color:#1a1a1a;left:1060.75px;transform:translateX(-50%);">C</span>
<span class="t" style="top:477px;font-size:6.5px;line-height:6.5px;color:#1a1a1a;left:429.75px;transform:translateX(-50%);">6-001</span>
<span class="t" style="top:477px;font-size:6.5px;line-height:6.5px;color:#1a1a1a;right:778.00px;">500,00</span>
<span class="t" style="top:477px;font-size:6.5px;line-height:6.5px;color:#1a1a1a;right:736.00px;">500,00</span>
<span class="t" style="top:477px;font-size:6.5px;line-height:6.5px;color:#1a1a1a;right:694.50px;">0,00</span>
<span class="t" style="top:477px;font-size:6.5px;line-height:6.5px;color:#1a1a1a;left:599.25px;transform:translateX(-50%);">24/03/2023</span>
<span class="t" style="top:477px;font-size:6.5px;line-height:6.5px;color:#1a1a1a;left:642.50px;transform:translateX(-50%);">01/04/2024</span>
<span class="t" style="top:477px;font-size:6.5px;line-height:6.5px;color:#1a1a1a;left:679.25px;transform:translateX(-50%);">374</span>
<span class="t" style="top:477px;font-size:6.5px;line-height:6.5px;color:#1a1a1a;right:543.00px;">30</span>
<span class="t" style="top:477px;font-size:6.5px;line-height:6.5px;color:#1a1a1a;right:507.00px;">30</span>
<span class="t" style="top:477px;font-size:6.5px;line-height:6.5px;color:#1a1a1a;right:471.50px;">0</span>
<span class="t" style="top:477px;font-size:6.5px;line-height:6.5px;color:#1a1a1a;right:429.20px;">10</span>
<span class="t" style="top:477px;font-size:6.5px;line-height:6.5px;color:#1a1a1a;right:387.50px;">10</span>
<span class="t" style="top:477px;font-size:6.5px;line-height:6.5px;color:#1a1a1a;right:344.80px;">0</span>
<span class="t" style="top:477px;font-size:6.5px;line-height:6.5px;color:#1a1a1a;left:946.50px;transform:translateX(-50%);">C</span>
<span class="t" style="top:477px;font-size:6.5px;line-height:6.5px;color:#1a1a1a;left:984.50px;transform:translateX(-50%);">NÃO</span>
<span class="t" style="top:477px;font-size:6.5px;line-height:6.5px;color:#1a1a1a;left:1022.50px;transform:translateX(-50%);">C</span>
<span class="t" style="top:477px;font-size:6.5px;line-height:6.5px;color:#1a1a1a;left:1060.75px;transform:translateX(-50%);">C</span>
<span class="t" style="top:492px;font-size:6.5px;line-height:6.5px;color:#1a1a1a;left:429.75px;transform:translateX(-50%);">Média</span>
<span class="t" style="top:492px;font-size:6.5px;line-height:6.5px;color:#1a1a1a;right:778.00px;">500,00</span>
<span class="t" style="top:492px;font-size:6.5px;line-height:6.5px;color:#1a1a1a;right:736.00px;">500,00</span>
<span class="t" style="top:492px;font-size:6.5px;line-height:6.5px;color:#1a1a1a;right:694.50px;">0,00</span>
<span class="t" style="top:492px;font-size:6.5px;line-height:6.5px;color:#1a1a1a;left:679.25px;transform:translateX(-50%);">374</span>
<span class="t" style="top:492px;font-size:6.5px;line-height:6.5px;color:#1a1a1a;right:543.00px;">30</span>
<span class="t" style="top:492px;font-size:6.5px;line-height:6.5px;color:#1a1a1a;right:507.00px;">30</span>
<span class="t" style="top:492px;font-size:6.5px;line-height:6.5px;color:#1a1a1a;right:471.50px;">0</span>
<span class="t" style="top:492px;font-size:6.5px;line-height:6.5px;color:#1a1a1a;right:429.20px;">10</span>
<span class="t" style="top:492px;font-size:6.5px;line-height:6.5px;color:#1a1a1a;right:387.50px;">10</span>
<span class="t" style="top:492px;font-size:6.5px;line-height:6.5px;color:#1a1a1a;right:344.80px;">0</span>
<span class="t" style="top:492px;font-size:6.5px;line-height:6.5px;color:#1a1a1a;left:946.50px;transform:translateX(-50%);">C</span>
<span class="t" style="top:492px;font-size:6.5px;line-height:6.5px;color:#1a1a1a;left:984.50px;transform:translateX(-50%);">NÃO</span>
<span class="t" style="top:492px;font-size:6.5px;line-height:6.5px;color:#1a1a1a;left:1022.50px;transform:translateX(-50%);">C</span>
<span class="t" style="top:492px;font-size:6.5px;line-height:6.5px;color:#1a1a1a;left:1060.75px;transform:translateX(-50%);">C</span>
<span class="t" style="top:514px;font-size:6.5px;line-height:6.5px;color:#1a1a1a;left:621.70px;transform:translateX(-50%);">PONTUAÇÃO</span>
<span class="t" style="top:529px;font-size:6.5px;line-height:6.5px;color:#1a1a1a;left:468.75px;transform:translateX(-50%);">ITEM DE AVALIAÇÃO</span>
<span class="t" style="top:529px;font-size:6.5px;line-height:6.5px;color:#1a1a1a;left:553.90px;transform:translateX(-50%);">PESO</span>
<span class="t" style="top:529px;font-size:6.5px;line-height:6.5px;color:#1a1a1a;left:603.70px;transform:translateX(-50%);">Nº Itens</span>
<span class="t" style="top:529px;font-size:6.5px;line-height:6.5px;color:#1a1a1a;left:653.60px;transform:translateX(-50%);">Nº Itens CFE</span>
<span class="t" style="top:529px;font-size:6.5px;line-height:6.5px;color:#1a1a1a;left:703.65px;transform:translateX(-50%);">Nº Itens CONDI</span>
<span class="t" style="top:529px;font-size:6.5px;line-height:6.5px;color:#1a1a1a;left:753.75px;transform:translateX(-50%);">Nº Itens N.CFE</span>
<span class="t" style="top:529px;font-size:6.5px;line-height:6.5px;color:#1a1a1a;left:803.85px;transform:translateX(-50%);">PONTUAÇÃO</span>
<span class="t" style="top:544px;font-size:6.5px;line-height:6.5px;color:#1a1a1a;left:410.4px;">1-Conformidade no preço</span>
<span class="t" style="top:544px;font-size:6.5px;line-height:6.5px;color:#1a1a1a;left:553.90px;transform:translateX(-50%);">1,00</span>
<span class="t" style="top:544px;font-size:6.5px;line-height:6.5px;color:#1a1a1a;left:603.70px;transform:translateX(-50%);">7</span>
<span class="t" style="top:544px;font-size:6.5px;line-height:6.5px;color:#1a1a1a;left:653.60px;transform:translateX(-50%);">6</span>
<span class="t" style="top:544px;font-size:6.5px;line-height:6.5px;color:#1a1a1a;left:703.65px;transform:translateX(-50%);">0</span>
<span class="t" style="top:544px;font-size:6.5px;line-height:6.5px;color:#1a1a1a;left:753.75px;transform:translateX(-50%);">1</span>
<span class="t" style="top:544px;font-size:6.5px;line-height:6.5px;color:#1a1a1a;font-weight:700;left:803.85px;transform:translateX(-50%);">0,85</span>
<span class="t" style="top:559px;font-size:6.5px;line-height:6.5px;color:#1a1a1a;left:410.4px;">2-Indice de pontualidade na entrega</span>
<span class="t" style="top:559px;font-size:6.5px;line-height:6.5px;color:#1a1a1a;left:553.90px;transform:translateX(-50%);">1,00</span>
<span class="t" style="top:559px;font-size:6.5px;line-height:6.5px;color:#1a1a1a;left:603.70px;transform:translateX(-50%);">7</span>
<span class="t" style="top:559px;font-size:6.5px;line-height:6.5px;color:#1a1a1a;left:653.60px;transform:translateX(-50%);">0</span>
<span class="t" style="top:560px;font-size:6.5px;line-height:6.5px;color:#1a1a1a;left:703.65px;transform:translateX(-50%);">1</span>
<span class="t" style="top:560px;font-size:6.5px;line-height:6.5px;color:#1a1a1a;left:753.75px;transform:translateX(-50%);">6</span>
<span class="t" style="top:559px;font-size:6.5px;line-height:6.5px;color:#1a1a1a;left:803.85px;transform:translateX(-50%);">0,07</span>
<span class="t" style="top:574px;font-size:6.5px;line-height:6.5px;color:#1a1a1a;left:410.4px;">3-Conformidade no prazo pagamento</span>
<span class="t" style="top:574px;font-size:6.5px;line-height:6.5px;color:#1a1a1a;left:553.90px;transform:translateX(-50%);">2,00</span>
<span class="t" style="top:574px;font-size:6.5px;line-height:6.5px;color:#1a1a1a;left:603.70px;transform:translateX(-50%);">7</span>
<span class="t" style="top:574px;font-size:6.5px;line-height:6.5px;color:#1a1a1a;left:653.60px;transform:translateX(-50%);">7</span>
<span class="t" style="top:575px;font-size:6.5px;line-height:6.5px;color:#1a1a1a;left:703.65px;transform:translateX(-50%);">0</span>
<span class="t" style="top:575px;font-size:6.5px;line-height:6.5px;color:#1a1a1a;left:753.75px;transform:translateX(-50%);">0</span>
<span class="t" style="top:574px;font-size:6.5px;line-height:6.5px;color:#1a1a1a;font-weight:700;left:803.85px;transform:translateX(-50%);">2,00</span>
<span class="t" style="top:513px;font-size:6.5px;line-height:6.5px;color:#1a1a1a;left:956.05px;transform:translateX(-50%);">CRITÉRIO DE AVALIAÇÃO</span>
<span class="t" style="top:529px;font-size:6.5px;line-height:6.5px;color:#1a1a1a;left:865.60px;transform:translateX(-50%);">MÉDIAS</span>
<span class="t" style="top:529px;font-size:6.5px;line-height:6.5px;color:#1a1a1a;letter-spacing:0.066px;left:981.08px;transform:translateX(-50%);">SITUAÇÃO DO FORNECEDOR PARA COMPRA</span>
<span class="t" style="top:544px;font-size:6.5px;line-height:6.5px;color:#1a1a1a;right:384.00px;white-space:pre;">0  a   5,99</span>
<span class="t" style="top:544px;font-size:6.5px;line-height:6.5px;color:#1a1a1a;left:892.7px;">Bloqueado para fornecimento</span>
<span class="t" style="top:559px;font-size:6.5px;line-height:6.5px;color:#1a1a1a;right:384.00px;white-space:pre;">6,00  a   6,99</span>
<span class="t" style="top:559px;font-size:6.5px;line-height:6.5px;color:#1a1a1a;left:892.7px;">Apto com restrições</span>
<span class="t" style="top:574px;font-size:6.5px;line-height:6.5px;color:#1a1a1a;right:384.00px;white-space:pre;">7,00  a  10,00</span>
<span class="t" style="top:574px;font-size:6.5px;line-height:6.5px;color:#1a1a1a;left:892.7px;">Apto</span>
<svg style="left:0;top:0;" width="1270" height="665" viewBox="0 0 1270 665" fill="none" stroke="#1c1c1c"><path d="M408.50 307.60 H1080.00" stroke-width="1.15"/><path d="M451.00 322.10 H927.50" stroke-width="1.1"/><path d="M408.50 337.00 H1080.00" stroke-width="1.25"/><path d="M408.50 352.05 H1080.00" stroke-width="1.15"/><path d="M408.50 367.11 H1080.00" stroke-width="1.15"/><path d="M408.50 382.16 H1080.00" stroke-width="1.15"/><path d="M408.50 397.22 H1080.00" stroke-width="1.15"/><path d="M408.50 412.27 H1080.00" stroke-width="1.15"/><path d="M408.50 427.33 H1080.00" stroke-width="1.15"/><path d="M408.50 442.38 H1080.00" stroke-width="1.15"/><path d="M408.50 457.44 H1080.00" stroke-width="1.15"/><path d="M408.50 472.49 H1080.00" stroke-width="1.15"/><path d="M408.50 487.55 H1080.00" stroke-width="1.15"/><path d="M408.50 502.60 H1080.00" stroke-width="1.15"/><path d="M408.50 307.60 V502.60" stroke-width="1.0"/><path d="M451.40 307.60 V502.60" stroke-width="1.3"/><path d="M493.50 321.60 V502.60" stroke-width="1.3"/><path d="M535.50 321.60 V502.60" stroke-width="1.3"/><path d="M577.00 307.60 V502.60" stroke-width="1.3"/><path d="M621.50 321.60 V502.60" stroke-width="1.0"/><path d="M663.50 321.60 V502.60" stroke-width="1.0"/><path d="M695.00 307.60 V502.60" stroke-width="1.3"/><path d="M731.50 321.60 V502.60" stroke-width="1.0"/><path d="M766.50 321.60 V502.60" stroke-width="1.0"/><path d="M801.50 307.60 V502.60" stroke-width="1.3"/><path d="M842.50 321.60 V502.60" stroke-width="1.0"/><path d="M883.50 321.60 V502.60" stroke-width="1.0"/><path d="M927.50 307.60 V502.60" stroke-width="1.3"/><path d="M965.50 307.60 V502.60" stroke-width="1.0"/><path d="M1003.50 307.60 V502.60" stroke-width="1.0"/><path d="M1041.50 307.60 V502.60" stroke-width="1.0"/><path d="M1080.00 307.60 V502.60" stroke-width="1.0"/><path d="M408.50 510.40 H828.90" stroke-width="1.05"/><path d="M408.50 525.20 H828.90" stroke-width="1.05"/><path d="M408.50 540.30 H828.90" stroke-width="1.05"/><path d="M408.50 555.40 H828.90" stroke-width="1.05"/><path d="M408.50 570.30 H828.90" stroke-width="1.05"/><path d="M408.50 585.30 H828.90" stroke-width="1.05"/><path d="M408.50 510.40 V590.00" stroke-width="1.05"/><path d="M529.00 525.20 V590.00" stroke-width="1.05"/><path d="M578.80 525.20 V590.00" stroke-width="1.05"/><path d="M628.60 525.20 V590.00" stroke-width="1.05"/><path d="M678.60 525.20 V590.00" stroke-width="1.05"/><path d="M728.70 525.20 V590.00" stroke-width="1.05"/><path d="M778.80 525.20 V590.00" stroke-width="1.05"/><path d="M828.90 510.40 V590.00" stroke-width="1.05"/><path d="M840.60 510.40 H1071.50" stroke-width="1.05"/><path d="M840.60 525.20 H1071.50" stroke-width="1.05"/><path d="M840.60 540.30 H1071.50" stroke-width="1.05"/><path d="M840.60 555.40 H1071.50" stroke-width="1.05"/><path d="M840.60 570.30 H1071.50" stroke-width="1.05"/><path d="M840.60 585.30 H1071.50" stroke-width="1.05"/><path d="M840.60 510.40 V590.00" stroke-width="1.05"/><path d="M1071.50 510.40 V590.00" stroke-width="1.05"/><path d="M890.60 525.20 V590.00" stroke-width="1.05"/></svg>
</div>
<svg style="left:303px;top:56px;" width="24" height="24" viewBox="0 0 24 24"><g fill="none" stroke="#2467d1" stroke-width="1.5" stroke-linecap="round" stroke-linejoin="round"><path d="M14.4 2 C8 2 3.3 6 3.3 11.5 C3.3 17.5 7.5 21.6 12.5 21.6 C16 21.6 18.8 20.6 20.5 18.9 C15 19.4 9.2 15.5 9.2 9.2 C9.2 6 11.5 3.5 14.4 2 Z"/></g></svg>
<svg style="left:337px;top:56px;" width="24" height="24" viewBox="0 0 24 24"><g fill="none" stroke="#2467d1" stroke-width="1.5" stroke-linecap="round" stroke-linejoin="round"><path d="M12 1.2 C5.6 1.2 1 6 1 12 C1 18 5.4 22.6 10.8 22.6 C13.6 22.6 14.6 21 14 18.8 C13.3 16.4 14.6 14.6 17 14.6 L19.4 14.6 C22 14.6 23.4 13 23.4 10.6 C23.4 5.4 18.6 1.2 12 1.2 Z"/><g fill="#2467d1" stroke="none"><circle cx="6.2" cy="11.7" r="1.1"/><circle cx="7.4" cy="7.3" r="1"/><circle cx="11.9" cy="5.4" r="1"/><circle cx="16.7" cy="7.3" r="1"/></g></g></svg>
<svg style="left:370px;top:56px;" width="24" height="24" viewBox="0 0 24 24"><g fill="none" stroke="#2467d1" stroke-width="1.5" stroke-linecap="round" stroke-linejoin="round"><rect x="4.6" y="1.1" width="16.6" height="21.6" rx="2.4"/><path d="M4.6 7 H21.2"/><g fill="#2467d1" stroke="none"><circle cx="8.8" cy="11.2" r="1"/><circle cx="12.9" cy="11.2" r="1"/><circle cx="17" cy="11.2" r="1"/><circle cx="8.8" cy="15" r="1"/><circle cx="12.9" cy="15" r="1"/><circle cx="17" cy="15" r="1"/><circle cx="17" cy="19" r="1"/></g><path d="M8 19 H13.4"/></g></svg>
<svg style="left:405px;top:56px;" width="24" height="24" viewBox="0 0 24 24"><g fill="none" stroke="#2467d1" stroke-width="1.5" stroke-linecap="round" stroke-linejoin="round"><rect x="1" y="2.4" width="22" height="19" rx="2.4"/><path d="M1 8.2 H23 M5.2 13 H18.8 M5.2 16.9 H18.8 M16.6 4.6 L18.2 5.9 L19.8 4.6"/></g></svg>
<svg style="left:439px;top:56px;" width="24" height="24" viewBox="0 0 24 24"><g fill="none" stroke="#2467d1" stroke-width="1.5" stroke-linecap="round" stroke-linejoin="round"><rect x="0.9" y="4.5" width="22" height="15.4" rx="2.2"/><path d="M1.2 6 L11.9 13.6 L22.6 6"/></g></svg>
<svg style="left:473px;top:56px;" width="24" height="24" viewBox="0 0 24 24"><g fill="none" stroke="#2467d1" stroke-width="1.5" stroke-linecap="round" stroke-linejoin="round"><path d="M5.6 1.3 C4 1.1 1.2 2.6 1 4.6 C0.6 9 4 14.2 8 17.6 C12 21 17.6 23.4 21 22 C22.8 21.2 23.6 18.6 23 17.4 C22.4 16.2 17.6 14.4 16.4 14.2 C15.4 14.2 14 16.4 12.6 16 C10.6 15.2 7.6 12 6.8 10.2 C6.4 9 8.6 7.8 8.4 6.6 C8.2 5.4 6.8 1.6 5.6 1.3 Z"/></g></svg>
<svg style="left:507px;top:56px;" width="24" height="24" viewBox="0 0 24 24"><g fill="none" stroke="#2467d1" stroke-width="1.5" stroke-linecap="round" stroke-linejoin="round"><circle cx="8.4" cy="7.3" r="3.9"/><path d="M0.9 20 C1.6 15.6 4.6 13.6 8.4 13.6 C12.2 13.6 15.2 15.6 15.9 20 Z"/><path d="M14.2 3.9 A3.5 3.5 0 1 1 15 10.6"/><path d="M16.2 13.2 C20 13.2 22.4 15.2 23.1 19.2 H19.6"/></g></svg>
<svg style="left:541px;top:56px;" width="24" height="24" viewBox="0 0 24 24"><g fill="none" stroke="#2467d1" stroke-width="1.5" stroke-linecap="round" stroke-linejoin="round"><path d="M3.2 0.9 L0.9 3.2 L3.4 7 L5.4 7.2 L13.4 15.2 M7.2 5.4 L7 3.4 L3.2 0.9 M5.4 7.2 L7.2 5.4 L15.2 13.4"/><path d="M13.6 15.4 L15.4 13.6 L23 20 C23.6 20.8 23.6 21.8 22.8 22.6 C22 23.4 20.8 23.4 20.2 22.8 Z"/><path d="M10.4 8 C9.6 5.4 10.2 3 12.2 1.6 C13.8 0.5 15.8 0.4 17.4 1 L14.2 4.4 L15 7.6 L18.2 8.4 L21.6 5 C22.4 7 22 9.4 20.4 11 C19 12.4 17 12.8 15.2 12.4 M10.4 12.6 L1.4 20 C0.6 20.8 0.6 22 1.4 22.8 C2.2 23.6 3.4 23.6 4.2 22.8 L11.6 13.8"/><circle cx="3.4" cy="20.8" r="0.4"/></g></svg>
<svg style="left:575px;top:56px;" width="24" height="24" viewBox="0 0 24 24"><g fill="none" stroke="#2467d1" stroke-width="1.5" stroke-linecap="round" stroke-linejoin="round"><rect x="0.9" y="6.3" width="22" height="15.4" rx="2.2"/><path d="M7.4 6.3 V3 C7.4 1.8 8 1.2 9.2 1.2 H14.6 C15.8 1.2 16.4 1.8 16.4 3 V6.3 M0.9 12.6 H9.6 M14.2 12.6 H22.9"/><rect x="9.6" y="11" width="4.6" height="3.8" rx="0.6"/></g></svg>
<svg style="left:47px;top:130px;" width="32" height="33" viewBox="0 0 32 33"><g fill="none" stroke="#2467d1" stroke-width="1.8" stroke-linecap="round" stroke-linejoin="round"><circle cx="16" cy="8.9" r="7"/><path d="M3.1 29.6 C3.1 24 8.5 21.4 16 21.4 C23.5 21.4 29 24 29 29.6 C29 30.6 28.4 31.2 27.4 31.2 H4.7 C3.7 31.2 3.1 30.6 3.1 29.6 Z"/></g></svg>
<svg style="left:162px;top:130px;" width="22" height="33" viewBox="0 0 22 33"><g fill="none" stroke="#2467d1" stroke-width="1.7" stroke-linecap="round" stroke-linejoin="round"><rect x="7.4" y="2.2" width="7.4" height="4.6" rx="0.6"/><path d="M7.4 6.8 C7 9 3 10 3 13 C3 14.6 3.8 15 3.8 16.6 C3.8 18.2 3 18.6 3 20.2 C3 21.8 3.8 22.2 3.8 23.8 C3.8 25.4 3 25.8 3 27.4 V29 C3 31 4.4 32 6.2 32 H16 C17.8 32 19.2 31 19.2 29 V27.4 C19.2 25.8 18.4 25.4 18.4 23.8 C18.4 22.2 19.2 21.8 19.2 20.2 C19.2 18.6 18.4 18.2 18.4 16.6 C18.4 15 19.2 14.6 19.2 13 C19.2 10 15.2 9 14.8 6.8 M7.6 16.4 H14.6 M7.6 23.8 H14.6"/></g></svg>
<svg style="left:240px;top:149px;" width="8" height="11" viewBox="0 0 8 11"><path d="M7.4 0.4 V10.2 L0.6 5.3 Z" fill="#2467d1"/></svg>
<svg style="left:239px;top:169.5px;" width="12" height="7" viewBox="0 0 12 7"><path d="M0.6 6.1 L5.9 0.5 L11.3 6.1 Z" fill="#ababab"/></svg>
<svg style="left:232.5px;top:202.5px;" width="25" height="19" viewBox="0 0 25 19"><g fill="none" stroke="#2467d1" stroke-width="1.5" stroke-linecap="round" stroke-linejoin="round"><path d="M2.2 17.6 V3 C2.2 1.8 2.9 1.1 4.1 1.1 H8.6 L11 3.6 H18.4 C19.6 3.6 20.3 4.3 20.3 5.5 V7.4 M2.2 17.6 L5.2 8.8 C5.5 7.9 6.2 7.4 7.2 7.4 H22.4 C23.7 7.4 24.3 8.4 23.9 9.6 L21.6 16.4 C21.3 17.3 20.6 17.8 19.6 17.8 H2.4"/></g></svg>
<svg style="left:232.5px;top:241px;" width="25" height="23" viewBox="0 0 25 23"><g fill="none" stroke="#b9b9b9" stroke-width="1.4" stroke-linecap="round" stroke-linejoin="round"><path d="M11 21 H3 C1.8 21 1.1 20.3 1.1 19.1 V2.9 C1.1 1.7 1.8 1 3 1 H10.6 L16.4 6.8 V11 M10.6 1 V5 C10.6 6.2 11.3 6.8 12.5 6.8 H16.4"/><circle cx="18.2" cy="16.6" r="5.4"/><path d="M16.2 14.6 L20.2 18.6 M20.2 14.6 L16.2 18.6"/></g></svg>
<svg style="left:233.5px;top:281px;" width="22" height="22" viewBox="0 0 22 22"><g fill="none" stroke="#2467d1" stroke-width="1.5" stroke-linecap="round" stroke-linejoin="round"><path d="M1.1 3.2 C1.1 1.9 1.9 1.1 3.2 1.1 H16.4 L20.9 5.6 V18.6 C20.9 19.9 20.1 20.7 18.8 20.7 H3.2 C1.9 20.7 1.1 19.9 1.1 18.6 Z M5.4 1.1 V5.4 C5.4 6.2 5.8 6.6 6.6 6.6 H13.8 C14.6 6.6 15 6.2 15 5.4 V1.1"/><circle cx="11" cy="13.4" r="2.9"/></g></svg>
<svg style="left:233px;top:320px;" width="24" height="24" viewBox="0 0 24 24"><g fill="none" stroke="#2467d1" stroke-width="1.5" stroke-linecap="round" stroke-linejoin="round"><path d="M20.60 12.00 L20.62 12.46 L20.69 12.92 L20.81 13.41 L20.99 13.93 L21.51 14.58 L21.99 15.28 L22.06 15.90 L22.01 16.50 L21.85 17.07 L21.60 17.60 L21.26 18.08 L20.85 18.50 L20.36 18.85 L19.78 19.10 L18.94 19.04 L18.12 18.91 L17.57 19.01 L17.09 19.15 L16.66 19.32 L16.25 19.53 L15.87 19.78 L15.49 20.07 L15.13 20.42 L14.77 20.84 L14.48 21.61 L14.10 22.37 L13.60 22.75 L13.06 23.00 L12.48 23.15 L11.90 23.20 L11.32 23.15 L10.74 23.00 L10.20 22.75 L9.70 22.37 L9.32 21.61 L9.03 20.84 L8.67 20.42 L8.31 20.07 L7.93 19.78 L7.55 19.53 L7.14 19.32 L6.71 19.15 L6.23 19.01 L5.68 18.91 L4.86 19.04 L4.02 19.10 L3.44 18.85 L2.95 18.50 L2.54 18.08 L2.20 17.60 L1.95 17.07 L1.79 16.50 L1.74 15.90 L1.81 15.28 L2.29 14.58 L2.81 13.93 L2.99 13.41 L3.11 12.92 L3.18 12.46 L3.20 12.00 L3.18 11.54 L3.11 11.08 L2.99 10.59 L2.81 10.07 L2.29 9.42 L1.81 8.72 L1.74 8.10 L1.79 7.50 L1.95 6.93 L2.20 6.40 L2.54 5.92 L2.95 5.50 L3.44 5.15 L4.02 4.90 L4.86 4.96 L5.68 5.09 L6.23 4.99 L6.71 4.85 L7.14 4.68 L7.55 4.47 L7.93 4.22 L8.31 3.93 L8.67 3.58 L9.03 3.16 L9.32 2.39 L9.70 1.63 L10.20 1.25 L10.74 1.00 L11.32 0.85 L11.90 0.80 L12.48 0.85 L13.06 1.00 L13.60 1.25 L14.10 1.63 L14.48 2.39 L14.77 3.16 L15.13 3.58 L15.49 3.93 L15.87 4.22 L16.25 4.47 L16.66 4.68 L17.09 4.85 L17.57 4.99 L18.12 5.09 L18.94 4.96 L19.78 4.90 L20.36 5.15 L20.85 5.50 L21.26 5.92 L21.60 6.40 L21.85 6.93 L22.01 7.50 L22.06 8.10 L21.99 8.72 L21.51 9.42 L20.99 10.07 L20.81 10.59 L20.69 11.08 L20.62 11.54 Z"/><circle cx="11.9" cy="12" r="3.3"/></g></svg>
<svg style="left:235.5px;top:360px;" width="19" height="24" viewBox="0 0 19 24"><g fill="none" stroke="#b9b9b9" stroke-width="1.4" stroke-linecap="round" stroke-linejoin="round"><path d="M3 1 H11.4 L17.6 7.2 V21 C17.6 22.2 16.9 22.9 15.7 22.9 H3 C1.8 22.9 1.1 22.2 1.1 21 V2.9 C1.1 1.7 1.8 1 3 1 Z M11.4 1 V5.4 C11.4 6.6 12.1 7.2 13.3 7.2 H17.6"/><circle cx="8.6" cy="14.8" r="3.4"/><path d="M11.2 17.4 L14 20.2"/></g></svg>
<svg style="left:233px;top:400px;" width="25" height="24" viewBox="0 0 25 24"><g fill="none" stroke="#b9b9b9" stroke-width="1.4" stroke-linecap="round" stroke-linejoin="round"><path d="M3.4 22.8 H3 C1.8 22.8 1.1 22.1 1.1 20.9 V2.9 C1.1 1.7 1.8 1 3 1 H10.8 L17.4 7.6 V12.4 M10.8 1 V5.7 C10.8 6.9 11.5 7.6 12.7 7.6 H17.4"/></g></svg>
<span class="t" style="top:416px;font-size:9px;line-height:9px;color:#b0b0b0;font-weight:700;letter-spacing:-0.600px;left:240.4px;">PDF</span>
<svg style="left:233px;top:440px;" width="25" height="24" viewBox="0 0 25 24"><g fill="none" stroke="#2467d1" stroke-width="1.5" stroke-linecap="round" stroke-linejoin="round"><path d="M5.2 6.6 V3 C5.2 1.8 5.9 1.1 7.1 1.1 H17.5 C18.7 1.1 19.4 1.8 19.4 3 V6.6 M5 17.6 H3.2 C1.9 17.6 1.1 16.8 1.1 15.5 V9.9 C1.1 8 2.3 6.8 4.2 6.8 H20.4 C22.3 6.8 23.5 8 23.5 9.9 V15.5 C23.5 16.8 22.7 17.6 21.4 17.6 H19.6"/><rect x="5.1" y="13.4" width="14.4" height="9.4" rx="1.6"/><circle cx="19.6" cy="10.4" r="0.5"/></g></svg>
<svg style="left:233px;top:483px;" width="25" height="19" viewBox="0 0 25 19"><g fill="none" stroke="#2467d1" stroke-width="1.5" stroke-linecap="round" stroke-linejoin="round"><rect x="1" y="1" width="22.6" height="16.2" rx="2.4"/><path d="M1.4 3 L12.3 11.4 L23.2 3"/></g></svg>
<svg style="left:233.5px;top:521px;" width="22" height="22" viewBox="0 0 22 22"><g fill="none" stroke="#2467d1" stroke-width="1.5" stroke-linecap="round" stroke-linejoin="round"><path d="M11.2 1 A9.8 9.8 0 1 1 6 19 L1.2 20.6 L2.8 16 A9.8 9.8 0 0 1 11.2 1 Z"/><path d="M8.2 5.8 C7.4 5.8 6.4 6.8 6.6 8.2 C7 11.2 10.6 14.8 13.8 15.2 C15.2 15.4 16.2 14.4 16.2 13.6 L13.8 12.2 L12.8 13.2 C11.4 12.6 9.4 10.6 8.8 9.2 L9.8 8.2 Z" stroke-width="1" fill="#2467d1"/></g></svg>
<svg style="left:232.5px;top:563px;" width="26" height="19" viewBox="0 0 26 19"><g fill="none" stroke="#2467d1" stroke-width="1.5" stroke-linecap="round" stroke-linejoin="round"><path d="M13.4 14.2 H2.6 C1.6 14.2 1 13.6 1 12.6 V2.6 C1 1.6 1.6 1 2.6 1 H15.2 C16.2 1 16.8 1.6 16.8 2.6 V7.6 M6.4 17.8 H12 M9.2 14.4 V17.6 M19.2 7.4 V2 C19.2 1.4 19.6 1 20.2 1 H23.4 C24 1 24.4 1.4 24.4 2 V9.4 M20.4 3.4 H23.2 M20.4 5.6 H23.2" stroke-width="1.3"/><circle cx="19.4" cy="13.6" r="4.6" stroke-width="1.2"/><path d="M19.4 16.2 V11.2 M17.4 13 L19.4 11 L21.4 13" stroke-width="1.2"/></g></svg>
<svg style="left:239.5px;top:617.5px;" width="12" height="7" viewBox="0 0 12 7"><path d="M0.6 0.6 H10.8 L5.7 6.2 Z" fill="#2467d1"/></svg>
<div style="left:1242px;top:140px;width:27px;height:1px;background:#e4e4e4;"></div>
<div style="left:1242px;top:292px;width:27px;height:1px;background:#e4e4e4;"></div>
<svg style="left:1247px;top:120px;" width="16" height="12" viewBox="0 0 16 12"><path d="M2.3 0.4 V11.6" stroke="#1d66dc" stroke-width="2.3"/><path d="M4.6 5.8 L9.8 1.1 V3.9 H15 V7.7 H9.8 V10.5 Z" fill="#1d66dc"/></svg>
<svg style="left:1245.8px;top:146px;" width="17" height="14" viewBox="0 0 17 14"><g fill="none" stroke="#3069c8" stroke-width="1.15" stroke-linecap="round" stroke-linejoin="round"><path d="M3.6 1 H11 C12.4 1 13.2 1.8 13.2 3.2 V9 M3.6 1 C2.2 1 1.2 1.8 1.2 3 C1.2 4.2 2 5 3.4 5 H5.6 V10.6 C5.6 11.8 6.4 12.4 7.6 12.4 M5.8 3.2 C5.8 1.8 5 1 3.6 1 M7.6 12.4 H14.4 C15.6 12.4 16.2 11.8 16.2 10.8 C16.2 9.8 15.6 9 14.4 9 H9.4 C9.4 11.2 8.8 12.4 7.6 12.4"/></g></svg>
<svg style="left:1246.5px;top:171px;" width="17" height="15" viewBox="0 0 17 15"><g fill="none" stroke="#3069c8" stroke-width="1.15" stroke-linecap="round" stroke-linejoin="round"><path d="M3.8 13.2 C2.2 13.2 1 12.2 1 10.6 V3.4 H3.8 M3.8 13.2 V2.4 C3.8 1.4 4.4 0.8 5.4 0.8 H14.8 C15.8 0.8 16.4 1.4 16.4 2.4 V11.6 C16.4 12.6 15.8 13.2 14.8 13.2 Z"/><rect x="6.4" y="3.2" width="4" height="3.6" stroke-width="1.1"/><path d="M12.2 3.6 H14.2 M12.2 6.2 H14.2 M6.4 9 H14.2 M6.4 11 H14.2" stroke-width="1"/></g></svg>
<svg style="left:1246.5px;top:194px;" width="17" height="18" viewBox="0 0 17 18"><g fill="none" stroke="#3069c8" stroke-width="1.15" stroke-linecap="round" stroke-linejoin="round"><circle cx="8.7" cy="8.8" r="7.7"/></g></svg>
<span class="t" style="top:198px;font-size:11.5px;line-height:11.5px;color:#3069c8;left:1255.30px;transform:translateX(-50%);">?</span>
<svg style="left:1246.5px;top:220px;" width="17" height="16" viewBox="0 0 17 16"><g fill="none" stroke="#3069c8" stroke-width="1.15" stroke-linecap="round" stroke-linejoin="round"><circle cx="6.1" cy="4.9" r="3"/><path d="M0.8 14.5 C0.8 11.6 2.8 10 6.1 10 C9.4 10 11.4 11.6 11.4 14.5 Z"/><path d="M11.6 8 L13.2 9.4 L16.4 6.1"/></g></svg>
<svg style="left:1246.5px;top:244px;" width="17" height="18" viewBox="0 0 17 18"><g fill="none" stroke="#3069c8" stroke-width="1.15" stroke-linecap="round" stroke-linejoin="round"><path d="M1.3 12.4 C0.2 6.2 3.4 1.2 8.4 1.2 C13.4 1.2 16.8 6 16.3 11 C16 13.6 14.6 15 12.6 15.3 L11 15.5"/><ellipse cx="8.8" cy="15.5" rx="2.1" ry="1.1"/><rect x="2.9" y="7.5" width="2.9" height="5.3" rx="1.3"/><rect x="10.9" y="7.5" width="2.9" height="5.3" rx="1.3"/></g></svg>
<svg style="left:1247.5px;top:270px;" width="16" height="16" viewBox="0 0 16 16"><rect width="16" height="16" fill="#1a55c9"/><path d="M3.6 12.6 L11.6 4.6 M6 4.2 H11.9 V10" stroke="#fff" stroke-width="2.1" fill="none"/></svg>
<svg style="left:1247.5px;top:295.5px;" width="16" height="17" viewBox="0 0 16 17"><g fill="none" stroke="#3069c8" stroke-width="1.15" stroke-linecap="round" stroke-linejoin="round"><path d="M8 1 C4.8 1 3.6 3.4 3.6 6 C3.6 9.4 2.6 10.8 1 12.2 H15 C13.4 10.8 12.4 9.4 12.4 6 C12.4 3.4 11.2 1 8 1 Z M6.4 14.4 C6.8 15.4 7.2 15.6 8 15.6 C8.8 15.6 9.2 15.4 9.6 14.4"/></g></svg>
<svg style="left:1247.5px;top:320px;" width="16" height="17" viewBox="0 0 16 17"><g fill="none" stroke="#3069c8" stroke-width="1.15" stroke-linecap="round" stroke-linejoin="round"><circle cx="8" cy="4.8" r="3.8"/><path d="M0.9 16.4 C0.9 12 3.6 10.6 8 10.6 C12.4 10.6 15.1 12 15.1 16.4 Z"/></g></svg>
<svg style="left:1247.5px;top:345px;" width="16" height="17" viewBox="0 0 16 17"><g fill="none" stroke="#3069c8" stroke-width="1.15" stroke-linecap="round" stroke-linejoin="round"><ellipse cx="8" cy="3.8" rx="7" ry="2.9"/><path d="M1 3.8 V13 C1 14.6 4 16 8 16 C12 16 15 14.6 15 13 V3.8 M1 8.4 C1 10 4 11.3 8 11.3 C12 11.3 15 10 15 8.4"/></g></svg>
<svg style="left:1246.5px;top:369.5px;" width="18" height="18" viewBox="0 0 18 18"><path d="M6.4 2.6 V11 H17.6 V2.6 Z" fill="#d8231d"/><ellipse cx="12" cy="11" rx="5.6" ry="2.3" fill="#d8231d" stroke="#fff" stroke-width="0.7"/><ellipse cx="12" cy="8.2" rx="5.6" ry="2.3" fill="#d8231d" stroke="#fff" stroke-width="0.7"/><ellipse cx="12" cy="5.4" rx="5.6" ry="2.3" fill="#d8231d" stroke="#fff" stroke-width="0.7"/><ellipse cx="12" cy="2.8" rx="5.6" ry="2.3" fill="#d8231d" stroke="#fff" stroke-width="0.7"/><path d="M0.4 8.4 V14.6 H11.6 V8.4 Z" fill="#d8231d"/><ellipse cx="6" cy="14.6" rx="5.6" ry="2.3" fill="#d8231d" stroke="#fff" stroke-width="0.7"/><ellipse cx="6" cy="11.6" rx="5.6" ry="2.3" fill="#d8231d" stroke="#fff" stroke-width="0.7"/><ellipse cx="6" cy="8.6" rx="5.6" ry="2.3" fill="#d8231d" stroke="#fff" stroke-width="0.7"/></svg>
<svg style="left:1246.5px;top:396px;" width="18" height="14" viewBox="0 0 18 14"><g fill="none" stroke="#3069c8" stroke-width="1.15" stroke-linecap="round" stroke-linejoin="round"><path d="M1.4 12.4 V2.4 C1.4 1.6 1.9 1.1 2.7 1.1 H5.8 L7.4 2.8 H12.6 C13.4 2.8 13.9 3.3 13.9 4.1 V5.4 M1.4 12.6 L3.6 6.4 C3.8 5.8 4.3 5.4 5 5.4 H15.6 C16.5 5.4 16.9 6.1 16.6 7 L15 11.6 C14.8 12.2 14.3 12.6 13.6 12.6 H1.6"/></g></svg>
<svg style="left:1249.5px;top:419px;" width="13" height="16" viewBox="0 0 13 16"><g fill="none" stroke="#3069c8" stroke-width="1.15" stroke-linecap="round" stroke-linejoin="round"><path d="M2.4 0.8 H7.6 L12 5.2 V14 C12 14.9 11.5 15.4 10.6 15.4 H2.4 C1.5 15.4 1 14.9 1 14 V2.2 C1 1.3 1.5 0.8 2.4 0.8 Z"/><path d="M5.2 8.6 L3.8 10.2 L5.2 11.8 M7.8 8.6 L9.2 10.2 L7.8 11.8" stroke-width="1"/></g></svg>
<svg style="left:0;top:0;" width="0" height="0"><defs><linearGradient id="gb" x1="0" y1="0" x2="0" y2="1"><stop offset="0" stop-color="#fafafa"/><stop offset="1" stop-color="#dcdcdc"/></linearGradient><linearGradient id="gp" x1="0" y1="0" x2="0.6" y2="1"><stop offset="0.35" stop-color="#fff"/><stop offset="1" stop-color="#b9cdec"/></linearGradient><linearGradient id="gg" x1="0" y1="0" x2="0.7" y2="1"><stop offset="0.3" stop-color="#f8f8f8"/><stop offset="1" stop-color="#b8b8b8"/></linearGradient><radialGradient id="gl" cx="0.4" cy="0.35" r="0.7"><stop offset="0" stop-color="#fff"/><stop offset="1" stop-color="#a9c3e6"/></radialGradient><linearGradient id="gr" x1="0" y1="0" x2="0" y2="1"><stop offset="0" stop-color="#b4d2ec"/><stop offset="1" stop-color="#7fa9d6"/></linearGradient></defs></svg>
<svg style="left:278.5px;top:184px;" width="23" height="22.5" viewBox="0 0 23 22.5"><path d="M1.4 0.5 H18.6 L22.4 4.4 V20.4 C22.4 21.4 21.8 22 20.8 22 H1.4 C0.8 22 0.5 21.7 0.5 21.1 V1.4 C0.5 0.8 0.8 0.5 1.4 0.5 Z" fill="#a2a2a2"/><rect x="5" y="0.5" width="12" height="7.4" fill="#cfcfcf"/><rect x="12.6" y="1.4" width="1.6" height="5.2" fill="#5c5c5c"/><rect x="4" y="12.2" width="14.6" height="9.6" fill="#f4f4f4"/><path d="M6.2 15.6 H16.4 M6.2 18.6 H10.6 M12 18.6 H16.4" stroke="#a8a8a8" stroke-width="1.6"/></svg>
<svg style="left:308.5px;top:182px;" width="27" height="27" viewBox="0 0 27 27"><rect x="6" y="0.6" width="15" height="11" fill="#ececec" stroke="#a8a8a8" stroke-width="1"/><path d="M3.6 8.6 H23.2 C25 8.6 26.2 9.8 26.2 11.6 V19 C26.2 20.4 25.4 21.2 24 21.2 H2.8 C1.4 21.2 0.6 20.4 0.6 19 V11.6 C0.6 9.8 1.8 8.6 3.6 8.6 Z" fill="#a8a8a8"/><path d="M0.8 13.6 H26" stroke="#939393" stroke-width="1"/><rect x="5.4" y="15" width="16" height="11.4" fill="#fafafa" stroke="#8c8c8c" stroke-width="1"/><path d="M8 18.4 H18.8 M8 20.8 H18.8 M8 23.2 H15" stroke="#6e6e6e" stroke-width="1.3"/></svg>
<svg style="left:343.5px;top:184.5px;" width="24" height="21.5" viewBox="0 0 24 21.5"><defs><linearGradient id="gbn" x1="0" y1="0" x2="1" y2="0"><stop offset="0" stop-color="#4e4e4e"/><stop offset="0.45" stop-color="#8e8e8e"/><stop offset="1" stop-color="#525252"/></linearGradient></defs><g fill="url(#gbn)" stroke="#4a4a4a" stroke-width="0.7"><rect x="4.6" y="0.8" width="5.4" height="4.6" rx="0.8"/><rect x="14" y="0.8" width="5.4" height="4.6" rx="0.8"/><path d="M4.2 5.2 H10.4 L11.2 18.6 C11.2 20.2 10.2 21 8.8 21 H3.2 C1.6 21 0.6 20.2 0.8 18.6 Z"/><path d="M13.6 5.2 H19.8 L23.2 18.6 C23.4 20.2 22.4 21 20.8 21 H15.2 C13.8 21 12.8 20.2 12.8 18.6 Z"/></g><rect x="9.4" y="8" width="5.2" height="5.6" fill="#5a5a5a" stroke="#444" stroke-width="0.6"/><path d="M5 2.4 H9.6 M14.4 2.4 H19" stroke="#b8b8b8" stroke-width="1"/><path d="M1.4 17.2 H10.8 M13.2 17.2 H22.6" stroke="#3e3e3e" stroke-width="1.2"/></svg>
<svg style="left:377.5px;top:184.5px;" width="18.5" height="22.5" viewBox="0 0 18.5 22.5"><path d="M0.6 0.6 H12.4 L17.6 5.8 V21.6 H0.6 Z" fill="url(#gp)" stroke="#6f6f6f" stroke-width="1"/><path d="M12.4 0.6 V5.8 H17.6" fill="#fff" stroke="#6f6f6f" stroke-width="0.9"/><path d="M9.4 1 V21.4" stroke="#6f6f6f" stroke-width="0.9"/><path d="M2 3 H7.6 M2 5.6 H7.6 M2 8.2 H7.6 M2 10.8 H7.6 M2 13.4 H7.6 M2 16 H7.6 M2 18.6 H7.6" stroke="#2e2e2e" stroke-width="1.3"/></svg>
<div style="left:409px;top:181px;width:1px;height:28px;background:#d2d2d2;"></div>
<svg style="left:416.8px;top:183px;" width="24.5" height="24" viewBox="0 0 24.5 24"><rect x="0.5" y="0.5" width="23.5" height="22.6" fill="url(#gb)" stroke="#bdbdbd" stroke-width="1"/><path d="M1 23.6 H24.3 V1" stroke="#a9a9a9" stroke-width="0.8" fill="none" opacity=".6"/><path d="M5 6.6 H19.6 V9 H5 Z M12.3 10.6 L19.8 17.4 H4.8 Z" fill="#8f8f8f"/></svg>
<svg style="left:449px;top:183px;" width="24.5" height="24" viewBox="0 0 24.5 24"><rect x="0.5" y="0.5" width="23.5" height="22.6" fill="url(#gb)" stroke="#bdbdbd" stroke-width="1"/><path d="M1 23.6 H24.3 V1" stroke="#a9a9a9" stroke-width="0.8" fill="none" opacity=".6"/><path d="M12.3 5 L20 12.6 H15.6 V18.6 H9 V12.6 H4.6 Z" fill="#8f8f8f"/></svg>
<div style="left:477px;top:179px;width:38px;height:31.5px;background:#fff;border:1px solid #d9d9d9;border-radius:3px;box-sizing:border-box;"></div>
<span class="t" style="top:190px;font-size:12px;line-height:12px;color:#222;left:482.5px;">1</span>
<span class="t" style="top:190px;font-size:12px;line-height:12px;color:#222;letter-spacing:-0.786px;left:516px;">de 8</span>
<svg style="left:541px;top:183px;" width="24.5" height="24" viewBox="0 0 24.5 24"><rect x="0.5" y="0.5" width="23.5" height="22.6" fill="url(#gb)" stroke="#bdbdbd" stroke-width="1"/><path d="M1 23.6 H24.3 V1" stroke="#a9a9a9" stroke-width="0.8" fill="none" opacity=".6"/><path d="M9 5 H15.6 V11 H20 L12.3 18.8 L4.6 11 H9 Z" fill="#4c4c4c"/></svg>
<svg style="left:572.8px;top:183px;" width="24.5" height="24" viewBox="0 0 24.5 24"><rect x="0.5" y="0.5" width="23.5" height="22.6" fill="url(#gb)" stroke="#bdbdbd" stroke-width="1"/><path d="M1 23.6 H24.3 V1" stroke="#a9a9a9" stroke-width="0.8" fill="none" opacity=".6"/><path d="M4.8 5.6 H19.8 L12.3 12.6 Z M5 15 H19.6 V17.4 H5 Z" fill="#4c4c4c"/></svg>
<div style="left:608px;top:181px;width:1px;height:28px;background:#d2d2d2;"></div>
<svg style="left:616px;top:183px;" width="24.5" height="24" viewBox="0 0 24.5 24"><rect x="0.5" y="0.5" width="23.5" height="22.6" fill="url(#gb)" stroke="#bdbdbd" stroke-width="1"/><path d="M1 23.6 H24.3 V1" stroke="#a9a9a9" stroke-width="0.8" fill="none" opacity=".6"/><path d="M5 10.4 H19.4 V13.6 H5 Z" fill="#4c4c4c"/></svg>
<div style="left:644px;top:179px;width:74.5px;height:31.5px;background:#fff;border:1px solid #d9d9d9;border-radius:3px;box-sizing:border-box;"></div>
<div style="left:698px;top:180px;width:1px;height:30px;background:#dedede;"></div>
<span class="t" style="top:190px;font-size:12px;line-height:12px;color:#222;letter-spacing:-0.516px;left:648.2px;">83%</span>
<svg style="left:702px;top:190px;" width="13" height="9" viewBox="0 0 13 9"><path d="M2 2.2 L6.4 6.8 L10.8 2.2" stroke="#555" stroke-width="1.1" fill="none"/></svg>
<svg style="left:723px;top:183px;" width="24.5" height="24" viewBox="0 0 24.5 24"><rect x="0.5" y="0.5" width="23.5" height="22.6" fill="url(#gb)" stroke="#bdbdbd" stroke-width="1"/><path d="M1 23.6 H24.3 V1" stroke="#a9a9a9" stroke-width="0.8" fill="none" opacity=".6"/><path d="M10.4 4.6 H14 V10.2 H19.6 V13.8 H14 V19.4 H10.4 V13.8 H4.8 V10.2 H10.4 Z" fill="#4c4c4c"/></svg>
<div style="left:758px;top:181px;width:1px;height:28px;background:#d2d2d2;"></div>
<svg style="left:769px;top:184.5px;" width="18.5" height="22" viewBox="0 0 18.5 22"><path d="M0.6 0.6 H12.2 L17.6 6 V21.2 H0.6 Z" fill="url(#gp)" stroke="#6f6f6f" stroke-width="1"/><path d="M12.2 0.6 V6 H17.6" fill="#fff" stroke="#6f6f6f" stroke-width="0.9"/></svg>
<span class="t" style="top:195px;font-size:9px;line-height:9px;color:#444;font-weight:700;letter-spacing:-0.758px;left:777.92px;transform:translateX(-50%);">1:1</span>
<svg style="left:801px;top:184.5px;" width="18.5" height="22" viewBox="0 0 18.5 22"><path d="M0.6 0.6 H12.2 L17.6 6 V21.2 H0.6 Z" fill="url(#gp)" stroke="#6f6f6f" stroke-width="1"/><path d="M12.2 0.6 V6 H17.6" fill="#fff" stroke="#6f6f6f" stroke-width="0.9"/><path d="M7.2 1.6 V20 M1.6 11 H16.6" stroke="#333" stroke-width="1"/><path d="M7.2 0.8 L5 4 H9.4 Z M7.2 20.8 L5 17.6 H9.4 Z M0.9 11 L4 8.8 V13.2 Z M17.3 11 L14.2 8.8 V13.2 Z" fill="#333"/></svg>
<svg style="left:833px;top:184.5px;" width="18.5" height="22" viewBox="0 0 18.5 22"><path d="M0.6 0.6 H12.2 L17.6 6 V21.2 H0.6 Z" fill="url(#gp)" stroke="#6f6f6f" stroke-width="1"/><path d="M12.2 0.6 V6 H17.6" fill="#fff" stroke="#6f6f6f" stroke-width="0.9"/><path d="M1.6 11 H16.6" stroke="#333" stroke-width="1"/><path d="M0.9 11 L4.2 8.6 V13.4 Z M17.3 11 L14 8.6 V13.4 Z" fill="#333"/></svg>
<div style="left:865px;top:181px;width:1px;height:28px;background:#d2d2d2;"></div>
<svg style="left:873px;top:184px;" width="24.5" height="22.5" viewBox="0 0 24.5 22.5"><g transform="" stroke-linejoin="round"><path d="M6.9 17.2 A8 8 0 1 1 19.2 14.4" stroke="#3d4754" stroke-width="7.2" fill="none"/><path d="M24.2 16.6 L13.6 11.4 L15.4 21.6 Z" fill="#3d4754" stroke="#3d4754" stroke-width="2"/><path d="M6.9 17.2 A8 8 0 1 1 19.2 14.4" stroke="#9cc1e2" stroke-width="5" fill="none"/><path d="M24.2 16.6 L13.6 11.4 L15.4 21.6 Z" fill="#8db6dc"/><path d="M7.4 15.6 A7 7 0 0 1 12 3.6" stroke="#c4dcf0" stroke-width="2" fill="none"/></g></svg>
<svg style="left:905px;top:184px;" width="24.5" height="22.5" viewBox="0 0 24.5 22.5"><g transform="translate(24.5 0) scale(-1 1)" stroke-linejoin="round"><path d="M6.9 17.2 A8 8 0 1 1 19.2 14.4" stroke="#3d4754" stroke-width="7.2" fill="none"/><path d="M24.2 16.6 L13.6 11.4 L15.4 21.6 Z" fill="#3d4754" stroke="#3d4754" stroke-width="2"/><path d="M6.9 17.2 A8 8 0 1 1 19.2 14.4" stroke="#9cc1e2" stroke-width="5" fill="none"/><path d="M24.2 16.6 L13.6 11.4 L15.4 21.6 Z" fill="#8db6dc"/><path d="M7.4 15.6 A7 7 0 0 1 12 3.6" stroke="#c4dcf0" stroke-width="2" fill="none"/></g></svg>
<div style="left:940.5px;top:181px;width:1px;height:28px;background:#d2d2d2;"></div>
<div style="left:944px;top:179px;width:32px;height:31px;background:#fbfbfb;border-top:2px solid #7d7d7d;border-left:2px solid #7d7d7d;border-right:1px solid #fff;border-bottom:1px solid #fff;box-sizing:border-box;"></div>
<svg style="left:949px;top:185px;" width="22" height="21" viewBox="-2 0 22 21"><path d="M6.2 20.4 C4.6 17.6 2.4 14.8 0.8 12.6 C0.2 11.6 1.2 10.4 2.4 11 C3.6 11.8 4.4 12.8 5.4 13.6 V4 C5.4 2.4 7.6 2.4 7.8 4 L8.2 10 V2 C8.4 0.4 10.6 0.4 10.8 2 L11 10 L11.4 2.8 C11.6 1.2 13.8 1.4 13.8 3 L13.8 10.4 L14.6 5.6 C15 4.2 17 4.6 16.8 6 C16.6 9.6 16.8 13.6 15.8 17 C15.4 18.2 15 19.2 14.6 20.4 Z" fill="url(#gl)" stroke="#3c3c3c" stroke-width="1.1" stroke-linejoin="round"/></svg>
<svg style="left:981px;top:186.5px;" width="23" height="20" viewBox="0 0 23 20"><path d="M1 0.8 H9.4 M1 18.6 H9.4 M5.2 0.8 V18.6" stroke="#3c3c3c" stroke-width="1.2" fill="none"/><path d="M12.2 0.4 V15.2 L15.4 12.2 L18 18.6 L20.4 17.6 L17.8 11.4 H22.2 Z" fill="#7d7d7d" stroke="#9a9a9a" stroke-width="0.5"/></svg>
<svg style="left:1010px;top:183px;" width="28" height="25" viewBox="0 0 28 25"><path d="M7.4 1.6 H25.4 V13.4 H15" stroke="#333" stroke-width="1" stroke-dasharray="2 1.6" fill="none"/><circle cx="9.4" cy="10.6" r="5.7" fill="url(#gl)" stroke="#2e2e2e" stroke-width="1.9"/><path d="M13.8 15.2 L18.8 21.2" stroke="#2e2e2e" stroke-width="2.8" stroke-linecap="round"/></svg>
<svg style="left:1043px;top:183px;" width="28" height="25" viewBox="0 0 28 25"><circle cx="8.8" cy="10.6" r="5.7" fill="url(#gl)" stroke="#2e2e2e" stroke-width="1.9"/><path d="M13.200000000000001 15.2 L18.200000000000003 21.2" stroke="#2e2e2e" stroke-width="2.8" stroke-linecap="round"/><path d="M20.8 1.6 L24.6 6.4 H17 Z M20.8 14.4 L24.6 9.8 H17 Z" fill="#8a8a8a"/></svg>
<div style="left:1079.5px;top:181px;width:1px;height:28px;background:#d2d2d2;"></div>
<svg style="left:1094px;top:186.5px;" width="12" height="20" viewBox="0 0 12 20"><path d="M0.8 0.6 V15.6 L4.2 12.4 L7 18.8 L9.4 17.8 L6.6 11.6 H11.2 Z" fill="#2f2f2f"/></svg>
<svg style="left:1116.5px;top:185px;" width="29" height="24" viewBox="0 0 29 24"><rect x="0.6" y="0.8" width="25" height="17.8" fill="url(#gp)" stroke="#777" stroke-width="1.1"/><rect x="3" y="3" width="11.6" height="13.4" fill="#f3ea52"/><path d="M27.6 7.4 L14.4 20.8 L10.4 23 L11.6 18.4 L24.8 4.8 Z" fill="#dcdcdc" stroke="#2e2e2e" stroke-width="1.1" stroke-linejoin="round"/><path d="M12.4 17.8 L25.2 5.2" stroke="#fff" stroke-width="1"/><path d="M10.4 23 L11.3 19.6 L13.6 21.4 Z" fill="#222"/></svg>
<span class="t" style="top:188px;font-size:13px;line-height:13px;color:#111;font-weight:700;font-family:'Liberation Serif',serif;left:1125.30px;transform:translateX(-50%);">T</span>
<svg style="left:1148.5px;top:186.5px;" width="22" height="18" viewBox="0 0 22 18"><path d="M10.6 0.6 C16.6 0.6 20.8 3.8 20.8 7.8 C20.8 11.8 16.6 15 10.6 15 C9.2 15 8 14.8 6.8 14.6 C5.6 16 3.6 17 1.6 17 C3 15.8 3.6 14.4 3.6 13 C1.6 11.6 0.6 9.8 0.6 7.8 C0.6 3.8 4.6 0.6 10.6 0.6 Z" fill="#f1e584" stroke="#5c5428" stroke-width="1"/><path d="M4.6 5.2 H16.8 M4.6 7.8 H16.8 M4.6 10.4 H12.6" stroke="#6a6030" stroke-width="1.1"/></svg>
<div style="left:1186.5px;top:181px;width:1px;height:28px;background:#d2d2d2;"></div>
<div style="left:1190px;top:179px;width:32px;height:32px;background:#fbfbfb;border-top:2px solid #7d7d7d;border-left:2px solid #7d7d7d;border-right:1px solid #fff;border-bottom:1px solid #fff;box-sizing:border-box;"></div>
<svg style="left:1197.5px;top:184.5px;" width="18.5" height="22" viewBox="0 0 18.5 22"><path d="M0.6 0.6 H12.2 L17.6 6 V21.2 H0.6 Z" fill="url(#gg)" stroke="#b4b4b4" stroke-width="1"/><path d="M12.2 0.6 V6 H17.6" fill="#fff" stroke="#b4b4b4" stroke-width="0.9"/><path d="M1.6 3.4 H12" stroke="#fff" stroke-width="2.6"/><path d="M1.6 7.6 H16.6" stroke="#bba6c6" stroke-width="2.4"/><path d="M1.6 10 H16.6 M1.6 12.4 H16.6" stroke="#fbfbfb" stroke-width="1.2"/><path d="M1.6 11.2 H16.6" stroke="#c9bcd0" stroke-width="0.9"/></svg>
<svg style="left:1109px;top:588px;" width="16" height="20" viewBox="0 0 16 20"><path d="M2.5 2.5999999999999996 H11.0 L14.8 6.3999999999999995 V18.999999999999996 H2.5 Z" fill="#c9c9c9" opacity=".55"/><path d="M1.5 1.4 H10.0 L13.8 5.199999999999999 V17.799999999999997 H1.5 Z" fill="url(#gp)" stroke="#6a6a6a" stroke-width="1" stroke-linejoin="round"/><path d="M10.0 1.4 V5.199999999999999 H13.8" fill="none" stroke="#6a6a6a" stroke-width="0.8"/></svg>
<div style="left:1132px;top:582px;width:31px;height:2px;background:#979797;"></div>
<div style="left:1132px;top:582px;width:2px;height:31px;background:#979797;"></div>
<svg style="left:1140px;top:588px;" width="17" height="20" viewBox="0 0 17 20"><path d="M2.6 2.4 V8.6 H15.4 V2.4" fill="none" stroke="#c9c9c9" stroke-width="1" opacity=".7"/><path d="M1.6 1.2 V7.4 H14.4 V1.2" fill="url(#gp)" stroke="#6a6a6a" stroke-width="1" stroke-linejoin="round"/><path d="M2.6 11.799999999999999 H12.4 L15.4 14.799999999999999 V19.0 H2.6 Z" fill="#c9c9c9" opacity=".55"/><path d="M1.6 10.6 H11.4 L14.4 13.6 V17.8 H1.6 Z" fill="url(#gp)" stroke="#6a6a6a" stroke-width="1" stroke-linejoin="round"/><path d="M11.4 10.6 V13.6 H14.4" fill="none" stroke="#6a6a6a" stroke-width="0.8"/></svg>
<svg style="left:1170px;top:588px;" width="21" height="20" viewBox="0 0 21 20"><path d="M2.5 2.5999999999999996 H7.000000000000001 L9.8 5.3999999999999995 V18.999999999999996 H2.5 Z" fill="#c9c9c9" opacity=".55"/><path d="M1.5 1.4 H6.000000000000001 L8.8 4.199999999999999 V17.799999999999997 H1.5 Z" fill="url(#gp)" stroke="#6a6a6a" stroke-width="1" stroke-linejoin="round"/><path d="M6.000000000000001 1.4 V4.199999999999999 H8.8" fill="none" stroke="#6a6a6a" stroke-width="0.8"/><path d="M12.3 2.5999999999999996 H16.8 L19.6 5.3999999999999995 V18.999999999999996 H12.3 Z" fill="#c9c9c9" opacity=".55"/><path d="M11.3 1.4 H15.8 L18.6 4.199999999999999 V17.799999999999997 H11.3 Z" fill="url(#gp)" stroke="#6a6a6a" stroke-width="1" stroke-linejoin="round"/><path d="M15.8 1.4 V4.199999999999999 H18.6" fill="none" stroke="#6a6a6a" stroke-width="0.8"/></svg>
<svg style="left:1201px;top:588px;" width="22" height="20" viewBox="0 0 22 20"><path d="M2.3 2.4 V8.6 H10.3 V2.4" fill="none" stroke="#c9c9c9" stroke-width="1" opacity=".7"/><path d="M1.3 1.2 V7.4 H9.3 V1.2" fill="url(#gp)" stroke="#6a6a6a" stroke-width="1" stroke-linejoin="round"/><path d="M12.6 2.4 V8.6 H20.6 V2.4" fill="none" stroke="#c9c9c9" stroke-width="1" opacity=".7"/><path d="M11.6 1.2 V7.4 H19.6 V1.2" fill="url(#gp)" stroke="#6a6a6a" stroke-width="1" stroke-linejoin="round"/><path d="M2.3 11.799999999999999 H7.500000000000001 L10.3 14.599999999999998 V19.0 H2.3 Z" fill="#c9c9c9" opacity=".55"/><path d="M1.3 10.6 H6.500000000000001 L9.3 13.399999999999999 V17.8 H1.3 Z" fill="url(#gp)" stroke="#6a6a6a" stroke-width="1" stroke-linejoin="round"/><path d="M6.500000000000001 10.6 V13.399999999999999 H9.3" fill="none" stroke="#6a6a6a" stroke-width="0.8"/><path d="M12.6 11.799999999999999 H17.8 L20.6 14.599999999999998 V19.0 H12.6 Z" fill="#c9c9c9" opacity=".55"/><path d="M11.6 10.6 H16.8 L19.6 13.399999999999999 V17.8 H11.6 Z" fill="url(#gp)" stroke="#6a6a6a" stroke-width="1" stroke-linejoin="round"/><path d="M16.8 10.6 V13.399999999999999 H19.6" fill="none" stroke="#6a6a6a" stroke-width="0.8"/></svg>
</body></html>
